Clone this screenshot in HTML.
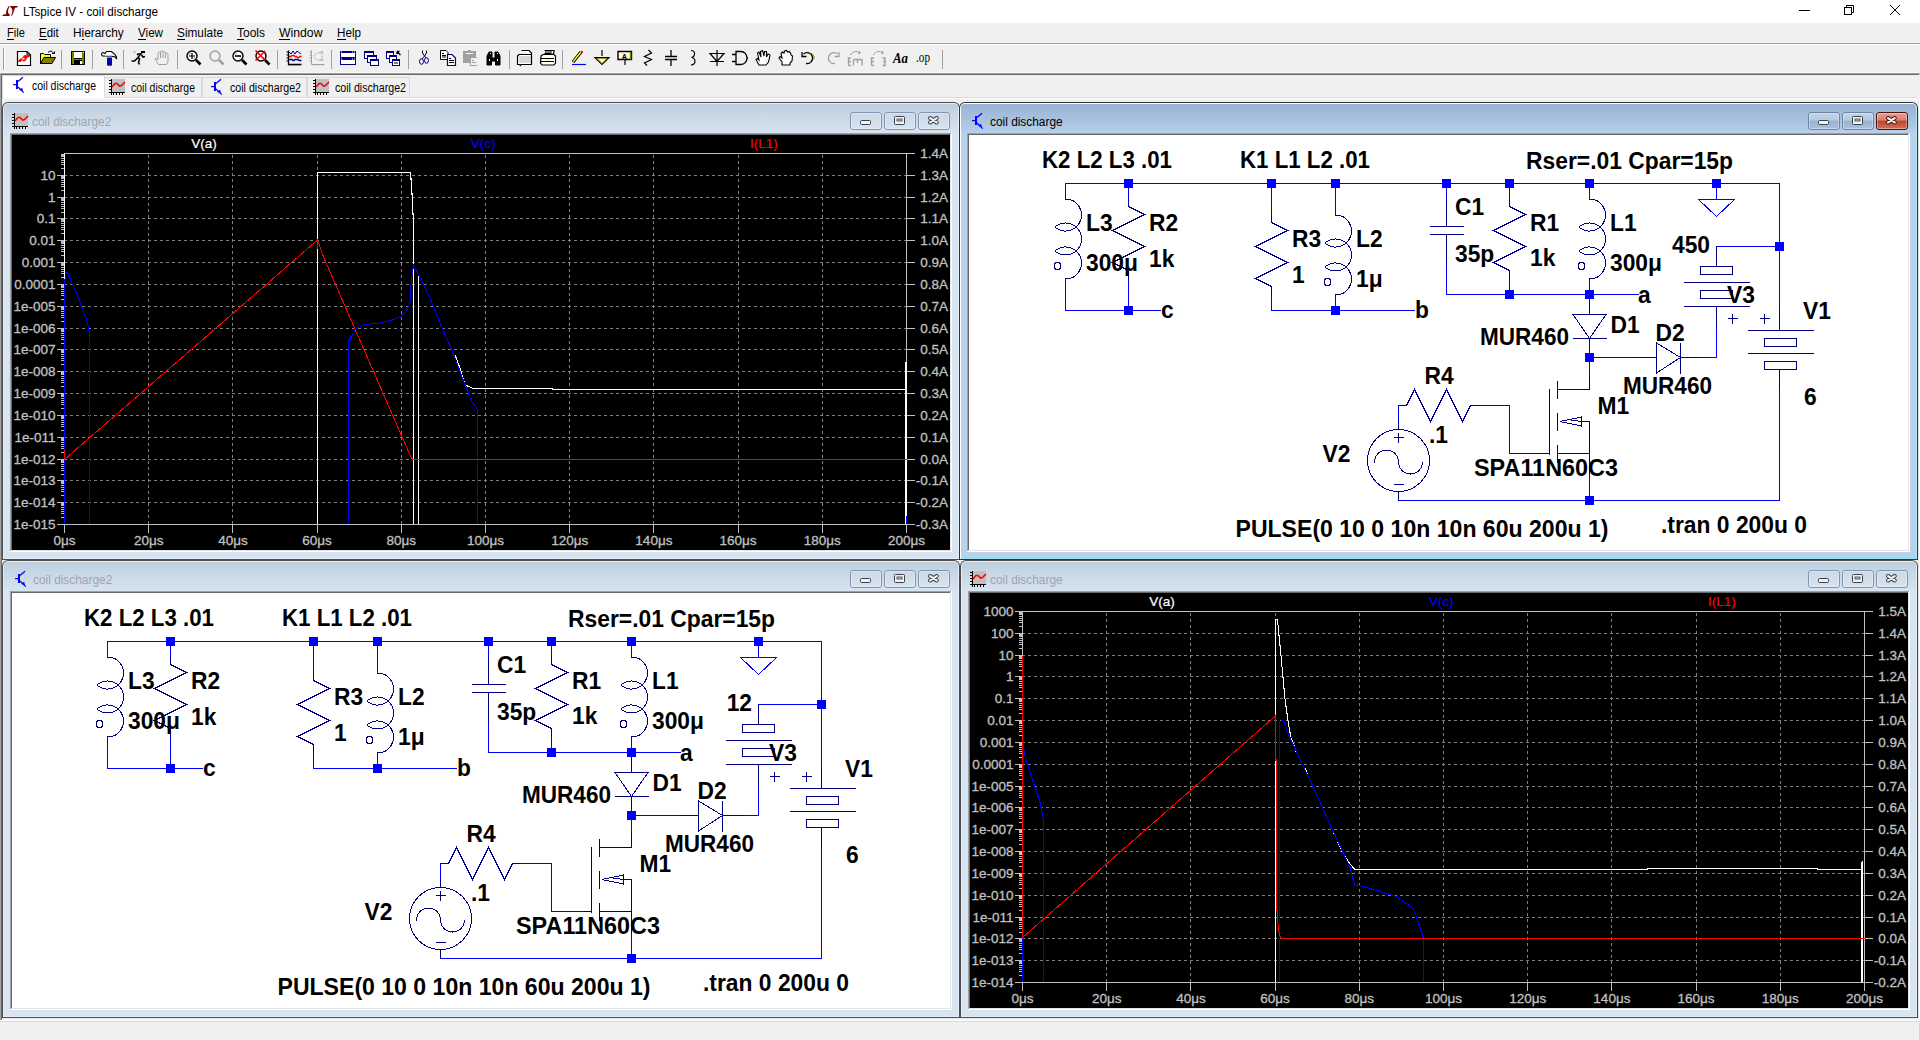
<!DOCTYPE html><html><head><meta charset="utf-8"><style>html,body{margin:0;padding:0;width:1920px;height:1040px;overflow:hidden;background:#F0F0F0}svg{display:block}</style></head><body><svg width="1920" height="1040" viewBox="0 0 1920 1040"><rect x="0" y="0" width="1920" height="1040" fill="#F0F0F0" /><rect x="0" y="0" width="1920" height="23" fill="#FFFFFF" /><path d="M2,16 L3.5,14.5 L6,14.3 Q5.8,11 7.5,8 L9,6 L10,6 Q7.8,9 8,12 Q8.2,14 10,14.5 L9.4,16 Z" fill="#800000"/><path d="M10.5,6 H18 L17,7.4 L15,7.8 L13,14 Q12.5,15.6 11,16 Q12.5,13 12.4,10.5 Q12.4,8.5 10.5,7.3 Z" fill="#800000"/><text x="23" y="16" font-family="Liberation Sans" font-size="12.5" fill="#000" textLength="135" lengthAdjust="spacingAndGlyphs" >LTspice IV - coil discharge</text><rect x="1799" y="10" width="11" height="1" fill="#000" /><rect x="1844.5" y="7.5" width="7" height="7" fill="none" stroke="#000" stroke-width="1"/><path d="M1846.5,7.5 V5.5 H1853.5 V12.5 H1851.5" fill="none" stroke="#000" stroke-width="1"/><path d="M1890,5 L1900,15 M1900,5 L1890,15" fill="none" stroke="#000" stroke-width="1" /><text x="7" y="37" font-family="Liberation Sans" font-size="12.5" fill="#000" textLength="18" lengthAdjust="spacingAndGlyphs" >File</text><rect x="7" y="39" width="7" height="1" fill="#000" /><text x="39" y="37" font-family="Liberation Sans" font-size="12.5" fill="#000" textLength="19.75" lengthAdjust="spacingAndGlyphs" >Edit</text><rect x="39" y="39" width="8" height="1" fill="#000" /><text x="73" y="37" font-family="Liberation Sans" font-size="12.5" fill="#000" textLength="50.75" lengthAdjust="spacingAndGlyphs" >Hierarchy</text><rect x="82" y="39" width="2" height="1" fill="#000" /><text x="138" y="37" font-family="Liberation Sans" font-size="12.5" fill="#000" textLength="25" lengthAdjust="spacingAndGlyphs" >View</text><rect x="138" y="39" width="8" height="1" fill="#000" /><text x="177" y="37" font-family="Liberation Sans" font-size="12.5" fill="#000" textLength="46" lengthAdjust="spacingAndGlyphs" >Simulate</text><rect x="177" y="39" width="8" height="1" fill="#000" /><text x="237" y="37" font-family="Liberation Sans" font-size="12.5" fill="#000" textLength="28" lengthAdjust="spacingAndGlyphs" >Tools</text><rect x="237" y="39" width="7" height="1" fill="#000" /><text x="279" y="37" font-family="Liberation Sans" font-size="12.5" fill="#000" textLength="43.5" lengthAdjust="spacingAndGlyphs" >Window</text><rect x="279" y="39" width="11" height="1" fill="#000" /><text x="337" y="37" font-family="Liberation Sans" font-size="12.5" fill="#000" textLength="24" lengthAdjust="spacingAndGlyphs" >Help</text><rect x="337" y="39" width="9" height="1" fill="#000" /><rect x="0" y="43" width="1920" height="1" fill="#A0A0A0" /><rect x="0" y="44" width="1920" height="1" fill="#FFFFFF" /><rect x="0" y="73" width="1920" height="1" fill="#A0A0A0" /><rect x="0" y="72" width="1920" height="1" fill="#F7F7F7" /><rect x="3" y="48" width="1" height="22" fill="#A0A0A0" /><rect x="4" y="48" width="1" height="22" fill="#FFFFFF" /><rect x="61" y="50" width="1" height="19" fill="#A0A0A0" /><rect x="92" y="50" width="1" height="19" fill="#A0A0A0" /><rect x="123" y="50" width="1" height="19" fill="#A0A0A0" /><rect x="177" y="50" width="1" height="19" fill="#A0A0A0" /><rect x="277" y="50" width="1" height="19" fill="#A0A0A0" /><rect x="331" y="50" width="1" height="19" fill="#A0A0A0" /><rect x="408" y="50" width="1" height="19" fill="#A0A0A0" /><rect x="509" y="50" width="1" height="19" fill="#A0A0A0" /><rect x="562" y="50" width="1" height="19" fill="#A0A0A0" /><rect x="942" y="50" width="1" height="19" fill="#A0A0A0" /><g shape-rendering="geometricPrecision"><g transform="translate(16,50)"><path d="M1.5,1.5 H11 L14.5,5 V15.5 H1.5 Z" stroke="#000" fill="#FFF" stroke-width="1.2" /><path d="M11,1.5 V5 H14.5" stroke="#000" fill="none" stroke-width="1" /><path d="M2,11.5 L4,9 H5.5 L7.5,6.5 L8,5.5 H14 L13,7 H11.5 L9,11 H6.5 L7.5,9.5 H6 L5,11.5 Z" stroke="#FF0000" fill="#FF0000" stroke-width="0.6" /><rect x="6.5" y="8" width="2" height="1.5" fill="#FFF"/></g><g transform="translate(40,50)"><path d="M0.5,3.5 H3.5 L4.5,4.5 H10.5 V7.5 H4.5 L0.5,13.5 Z" stroke="#000" fill="#FFFF00" stroke-width="1" /><path d="M0.5,13.5 L4,7.5 H15.5 L12,13.5 Z" stroke="#000" fill="#808000" stroke-width="1" /><path d="M8,2.5 Q11,-0.5 13.5,3" stroke="#000" fill="none" stroke-width="1" /><path d="M12,3.5 H14.5 V1.5" stroke="#000" fill="none" stroke-width="1" /></g><g transform="translate(70,50)"><rect x="1" y="1" width="14" height="14" fill="#000"/><rect x="2" y="2" width="2" height="12" fill="#808000"/><rect x="12" y="2" width="2" height="12" fill="#808000"/><rect x="4" y="2" width="8" height="6" fill="#FFF"/><rect x="4" y="9" width="8" height="1" fill="#808000"/><rect x="10" y="11" width="2" height="3" fill="#FFF"/><rect x="13" y="2" width="1" height="1" fill="#FFF"/></g><g transform="translate(101,50)"><path d="M0.5,4.5 Q0.5,2.5 2,2.5 L4,3.5 L5.5,1.5 H10.5 L14,4.5 L15.5,7 V8.5 L14,7 L12.5,6.5 H5 L3.5,6 H1.5 Z" stroke="#000" fill="#FFF" stroke-width="1.1" /><rect x="4" y="5" width="7" height="1.5" fill="#C8C8C8"/><rect x="6" y="7.5" width="5" height="8" fill="#0000C8"/><rect x="7" y="12" width="3" height="3.5" fill="#000090"/></g><g transform="translate(131,50)"><path d="M0.5,11 H3.5 L7,7.5 L9.5,4 L11,3 M7,7.5 L8.5,9 L7.5,12.5 L8.5,14.5 M9.5,4 L7,4 L6,5 M10.5,5 L12,7 L14,6.5" stroke="#000" fill="none" stroke-width="1.6" /><rect x="10" y="1" width="4" height="2" fill="#000"/><path d="M2,2 L4,3.5 M3,1 L5,2" stroke="#A0A0A0" fill="none" stroke-width="0.8" /></g><g transform="translate(154,50)"><path d="M4.5,14.5 L1,9 L2,8 L4,10 V3 L5.5,2 L6.5,3 V1.5 L8,0.5 L9,1.5 V2 L10.5,1.5 L11.5,3 V3.5 L13,3 L14,4.5 V12 L12.5,14.5 Z M6.5,3 V8 M9,2 V8 M11.5,3.5 V8" stroke="#A0A0A0" fill="none" stroke-width="1" /></g><g transform="translate(186,50)"><circle cx="6" cy="6" r="5" stroke="#000" stroke-width="1.4" fill="#FFF"/><path d="M10,10 L14.5,14.5" stroke="#000" fill="none" stroke-width="2.6" /><path d="M3,5 A3.5,3.5 0 0 1 5,3" stroke="#00FFFF" fill="none" stroke-width="1" /><path d="M9,7 A3.5,3.5 0 0 1 7,9" stroke="#00FFFF" fill="none" stroke-width="1" /><path d="M6,3 V9 M3,6 H9" stroke="#000" fill="none" stroke-width="1.2" /></g><g transform="translate(209,50)"><circle cx="6" cy="6" r="5" stroke="#A0A0A0" stroke-width="1.4" fill="none"/><path d="M10,10 L14.5,14.5" stroke="#A0A0A0" fill="none" stroke-width="2.6" /></g><g transform="translate(232,50)"><circle cx="6" cy="6" r="5" stroke="#000" stroke-width="1.4" fill="#FFF"/><path d="M10,10 L14.5,14.5" stroke="#000" fill="none" stroke-width="2.6" /><path d="M3,5 A3.5,3.5 0 0 1 5,3" stroke="#00FFFF" fill="none" stroke-width="1" /><path d="M9,7 A3.5,3.5 0 0 1 7,9" stroke="#00FFFF" fill="none" stroke-width="1" /><path d="M3,6 H9" stroke="#000" fill="none" stroke-width="1.6" /></g><g transform="translate(255,50)"><circle cx="6" cy="6" r="5" stroke="#000" stroke-width="1.4" fill="#FFF"/><path d="M10,10 L14.5,14.5" stroke="#000" fill="none" stroke-width="2.6" /><path d="M3,5 A3.5,3.5 0 0 1 5,3" stroke="#00FFFF" fill="none" stroke-width="1" /><path d="M9,7 A3.5,3.5 0 0 1 7,9" stroke="#00FFFF" fill="none" stroke-width="1" /><path d="M0.5,0.5 L10,10 M10,1 L0.5,10.5" stroke="#FF0000" fill="none" stroke-width="1.6" /></g><g transform="translate(286,50)"><path d="M2.5,0.5 V14.5 H15.5" stroke="#000" fill="none" stroke-width="1.3" /><path d="M0.5,2 H2 M0.5,5 H2 M0.5,8 H2 M0.5,11 H2 M4,15.5 V14 M7,15.5 V14 M10,15.5 V14 M13,15.5 V14" stroke="#000" fill="none" stroke-width="1" /><path d="M3,2 L5,4 L7,1 L9,4 L11,1 L15,4" stroke="#000080" fill="none" stroke-width="1" /><path d="M3,6.5 H5 L6,5.5 H8 L9,6.5 H10.5 L11.5,7.5 H13 L14,6.5 H15.5" stroke="#FF0000" fill="none" stroke-width="1.3" /><path d="M3,9.5 H6 L7,10.5 H8 L9,9.5 H12 L13,10.5 H15.5" stroke="#000080" fill="none" stroke-width="1.3" /></g><g transform="translate(309,50)"><path d="M2.5,0.5 V14.5 H15.5" stroke="#A0A0A0" fill="none" stroke-width="1" /><path d="M0.5,2 H2 M0.5,5 H2 M0.5,8 H2 M0.5,11 H2 M4,15.5 V14 M7,15.5 V14 M10,15.5 V14 M13,15.5 V14" stroke="#A0A0A0" fill="none" stroke-width="1" /><path d="M13,3 A6,5 0 0 0 5,6 A6,5 0 0 0 13,10 M13,1 V11 M11.5,2.5 L13,1 L14.5,2.5 M11.5,9.5 L13,11 L14.5,9.5" stroke="#A0A0A0" fill="none" stroke-width="1" stroke-dasharray="1.5,1"/></g><g transform="translate(340,50)"><rect x="0" y="1" width="16" height="7" fill="#000080"/><rect x="1" y="3" width="14" height="4" fill="#FFF"/><rect x="0" y="8" width="16" height="7" fill="#000080"/><rect x="1" y="10" width="14" height="4" fill="#FFF"/><rect x="1" y="1.5" width="1" height="1" fill="#FFF"/><rect x="12" y="1.5" width="1" height="1" fill="#FFF"/><rect x="14" y="1.5" width="1" height="1" fill="#FFF"/><rect x="1" y="8.5" width="1" height="1" fill="#FFF"/><rect x="12" y="8.5" width="1" height="1" fill="#FFF"/><rect x="14" y="8.5" width="1" height="1" fill="#FFF"/></g><g transform="translate(363,50)"><rect x="1" y="1" width="10" height="8" fill="#000080"/><rect x="2" y="3" width="8" height="5" fill="#FFF"/><rect x="4" y="5" width="10" height="8" fill="#000080"/><rect x="5" y="7" width="8" height="5" fill="#FFF"/><rect x="7" y="9" width="9" height="7" fill="#000080"/><rect x="8" y="11" width="7" height="4" fill="#FFF"/></g><g transform="translate(386,50)"><rect x="0" y="1" width="8" height="8" fill="#000080"/><rect x="1" y="3" width="6" height="5" fill="#FFF"/><rect x="3" y="5" width="8" height="8" fill="#000080"/><rect x="4" y="7" width="6" height="5" fill="#FFF"/><rect x="6" y="9" width="8" height="7" fill="#000080"/><rect x="7" y="11" width="6" height="4" fill="#FFF"/><rect x="8" y="12.5" width="4" height="1" fill="#000"/><path d="M11,1.5 L14.5,5 M11,1.5 H13.5 M11,1.5 V4" stroke="#000" fill="none" stroke-width="1.4" /></g><g transform="translate(417,50)"><path d="M5.5,0.5 V3 L7.5,6 L9.5,3 V0.5" stroke="#000" fill="none" stroke-width="1" /><ellipse cx="4.5" cy="11.5" rx="2" ry="2.8" stroke="#000080" fill="none" stroke-width="1"/><ellipse cx="9.5" cy="10.5" rx="2" ry="2.8" stroke="#000080" fill="none" stroke-width="1"/><path d="M7.5,6 L5,9 M7.5,6 L9,8" stroke="#000080" fill="none" stroke-width="1" /></g><g transform="translate(440,50)"><path d="M0.5,0.5 H6 L8,2.5 V9.5 H0.5 Z" stroke="#000" fill="#FFF" stroke-width="1" /><path d="M2,3.5 H4 M2,5.5 H6 M2,7 H6" stroke="#000" fill="none" stroke-width="1" /><path d="M7.5,4.5 H12 L15.5,8 V15.5 H7.5 Z" stroke="#000080" fill="#FFF" stroke-width="1.2" /><path d="M9,8.5 H11 M9,10.5 H14 M9,12.5 H14" stroke="#000" fill="none" stroke-width="1" /></g><g transform="translate(463,50)"><rect x="0" y="1" width="13" height="12" fill="#A0A0A0"/><rect x="5" y="0" width="3" height="2" fill="#A0A0A0"/><rect x="3" y="3" width="7" height="1" fill="#FFF"/><rect x="7" y="7" width="7" height="9" fill="#A0A0A0"/><rect x="8" y="8" width="6" height="7" fill="#F0F0F0"/><rect x="9" y="10" width="2" height="1" fill="#A0A0A0"/><rect x="9" y="12" width="4" height="1" fill="#A0A0A0"/></g><g transform="translate(486,50)"><path d="M1,15 V6 L3,2 H6 V8 H9 V2 H12 L14,6 V15 H9.5 V11 H5.5 V15 Z" stroke="#000" fill="#000" stroke-width="1" /><rect x="3" y="9" width="1" height="2" fill="#FFF"/><rect x="11" y="9" width="1" height="2" fill="#FFF"/><rect x="4" y="3" width="1" height="1" fill="#FFF"/><rect x="11" y="3" width="1" height="1" fill="#FFF"/></g><g transform="translate(517,50)"><path d="M4.5,0.5 H12 L14.5,3 V5 M0.5,6 L2,4.5 H14.5 V14.5 H4 L3.5,15.5 L2.5,14.5 H0.5 Z" stroke="#000" fill="#FFF" stroke-width="1.2" /><rect x="2" y="6" width="12" height="7" fill="#B0B0B0" opacity="0.5"/></g><g transform="translate(540,50)"><path d="M4.5,0.5 H14 V2 L13,4 V5 M1,6 L3,4.5 H14 L15.5,6 V13 L14,15 H2 L0.5,13 Z" stroke="#000" fill="#FFF" stroke-width="1.2" /><path d="M5,2 H12 M4.5,3.5 H11.5 M1,8.5 H14 M1,11.5 H14" stroke="#000" fill="none" stroke-width="1" /><rect x="7" y="9.5" width="3" height="1.5" fill="#FFFF00"/></g><g transform="translate(571,50)"><path d="M2,12 L10,2" stroke="#000" fill="none" stroke-width="3.2" /><path d="M2.2,11.5 L9.8,2.3" stroke="#FFFF00" fill="none" stroke-width="1.4" /><rect x="10" y="1" width="2" height="2" fill="#FF0000"/><path d="M1,14.5 H15" stroke="#0000FF" fill="none" stroke-width="1.2" /></g><g transform="translate(594,50)"><path d="M8,0 V6" stroke="#000" fill="none" stroke-width="1.2" /><path d="M1,7.5 H15 L8,14.5 Z" stroke="#000" fill="#FFFFC0" stroke-width="1.2" /><path d="M3,8.5 H13 L8,13.5 Z" stroke="#808000" fill="none" stroke-width="0.8" /></g><g transform="translate(617,50)"><path d="M1,1.5 H14.5 V9.5 H1 Z" stroke="#000" fill="#FFFFE0" stroke-width="1.4" /><path d="M13.5,2 V9.5" stroke="#808000" fill="none" stroke-width="1.5" /><path d="M8,10 V15" stroke="#000" fill="none" stroke-width="1.2" /><text x="7.5" y="8.5" font-family="Liberation Mono" font-weight="bold" font-size="8" text-anchor="middle" fill="#000">A</text></g><g transform="translate(640,50)"><path d="M8.5,0 L11.5,3 L4.5,6.5 L11.5,9.5 L4.5,13 L7,15.5" stroke="#000" fill="none" stroke-width="1.2" /></g><g transform="translate(663,50)"><path d="M8,0 V6 M2,6.5 H14 M2,9.5 H14 M8,10 V16" stroke="#000" fill="none" stroke-width="1.3" /></g><g transform="translate(686,50)"><path d="M5,0.5 Q8.5,0.5 8.5,3.5 Q8.5,7 5.5,7.5 Q9,8 9,11.5 Q9,14.5 5,15" stroke="#000" fill="none" stroke-width="1.2" /></g><g transform="translate(709,50)"><path d="M8,0 V16 M1,3.5 H15 L8,11.5 Z M1,11.5 H15" stroke="#000" fill="none" stroke-width="1.2" /></g><g transform="translate(732,50)"><path d="M0,4.5 H4 M0,11.5 H4 M4,1.5 H9 A6,6.5 0 0 1 9,14.5 H4 Z M15,8 H16" stroke="#000" fill="none" stroke-width="1.3" /></g><g transform="translate(755,50)"><path d="M4,15 L1,9.5 L2.5,8.5 L4,10 L2.5,3 L4,2 L6,7 L5.5,1.5 L7.5,0.5 L9,6 L9.5,1.5 L11.5,1.5 L11.5,7 L13,4 L15,5 L13.5,12 L11,15 Z" stroke="#000" fill="#FFF" stroke-width="1.1" /><path d="M10.5,10 L11,11" stroke="#00FFFF" fill="none" stroke-width="1" /></g><g transform="translate(778,50)"><path d="M4,15 V12 L1,8 L2,6.5 L4,8 L3,3.5 L4.5,2 L6,3 L6.5,1 L8.5,0.5 L9.5,2 L11,1.5 L12.5,3 L13,5 L14.5,6 L14,11 L12,13 V15 Z" stroke="#000" fill="#FFF" stroke-width="1.1" /></g><g transform="translate(801,50)"><path d="M2.5,4 A5.5,5.5 0 1 1 5,13.5" stroke="#000" fill="none" stroke-width="1.3" /><path d="M1,2 V6.5 H5.5" stroke="#000" fill="none" stroke-width="1.3" /><path d="M9,3 A5.5,5.5 0 0 1 13,9" stroke="#808000" fill="none" stroke-width="1" /></g><g transform="translate(824,50)"><path d="M13.5,4 A5.5,5.5 0 1 0 11,13.5" stroke="#A0A0A0" fill="none" stroke-width="1.3" /><path d="M15,2 V6.5 H10.5" stroke="#A0A0A0" fill="none" stroke-width="1.3" /></g><g transform="translate(847,50)"><path d="M1.5,15.5 V8 H4 M1.5,11.5 H4 M1.5,15.5 H4 M6.5,9.5 V15.5 M6.5,9.5 H15 V15.5 M10.5,9.5 V13" stroke="#A0A0A0" fill="none" stroke-width="1.4" /><path d="M3,5 Q8,-1 13,3 M12,1 L13.5,3 L11,4" stroke="#A0A0A0" fill="none" stroke-width="1" /></g><g transform="translate(870,50)"><path d="M1.5,15.5 V8 H4 M1.5,11.5 H4 M1.5,15.5 H4 M12.5,8 H15 V15.5 H12.5 M13,11.5 H15" stroke="#A0A0A0" fill="none" stroke-width="1.4" /><path d="M3,5 Q8,-1 13,3 M12,1 L13.5,3 L11,4" stroke="#A0A0A0" fill="none" stroke-width="1" /></g><g transform="translate(893,50)"><text x="0" y="13" font-family="Liberation Serif" font-style="italic" font-weight="bold" font-size="14" fill="#000" textLength="15" lengthAdjust="spacingAndGlyphs">Aa</text></g><g transform="translate(916,50)"><text x="0" y="12" font-family="Liberation Serif" font-size="14" fill="#000" textLength="14" lengthAdjust="spacingAndGlyphs">.op</text></g></g><rect x="0" y="74" width="1920" height="948" fill="#F0F0F0" /><rect x="2" y="97" width="1915" height="1" fill="#D9D9D9" /><rect x="2" y="98" width="1915" height="1" fill="#FFFFFF" /><rect x="104" y="77" width="98" height="20" fill="#F0F0F0" /><rect x="104.5" y="77.5" width="97" height="20" fill="none" stroke="#D9D9D9"/><rect x="202" y="77" width="105" height="20" fill="#F0F0F0" /><rect x="202.5" y="77.5" width="104" height="20" fill="none" stroke="#D9D9D9"/><rect x="307" y="77" width="103" height="20" fill="#F0F0F0" /><rect x="307.5" y="77.5" width="102" height="20" fill="none" stroke="#D9D9D9"/><rect x="2" y="75" width="102" height="23" fill="#FFFFFF" /><rect x="2" y="75" width="1" height="24" fill="#D9D9D9" /><rect x="2" y="75" width="103" height="1" fill="#D9D9D9" /><rect x="104" y="75" width="1" height="23" fill="#D9D9D9" /><g transform="translate(12,77)" fill="#0000FF"><rect x="4" y="3" width="2" height="9"/><rect x="1" y="7" width="3" height="1.2"/><path d="M6,4.5 L11,0.2" stroke="#0000FF" stroke-width="1.2" fill="none"/><path d="M6,10 L11.8,15.6" stroke="#0000FF" stroke-width="1.2" fill="none"/><path d="M7,12.8 L10.2,10.8 L11,14.6 Z"/></g><text x="32" y="90" font-family="Liberation Sans" font-size="12" fill="#000" textLength="64" lengthAdjust="spacingAndGlyphs" >coil discharge</text><g transform="translate(109,79)"><rect x="3" y="0" width="13" height="13" fill="#C0C0C0"/><rect x="2" y="0" width="1" height="16" fill="#000"/><rect x="2" y="13" width="14" height="1" fill="#000"/><path d="M0,1.5 H2 M0,4.5 H2 M0,7.5 H2 M0,10.5 H2 M4.5,14 V16 M7.5,14 V16 M10.5,14 V16 M13.5,14 V16 M0,13.5 H2" stroke="#000" stroke-width="1"/><path d="M3,8 L6,4.5 L8,4.5 L10.5,7 L12.5,6.5 L16,3" stroke="#FF0000" stroke-width="1.6" fill="none"/></g><text x="131" y="92" font-family="Liberation Sans" font-size="12" fill="#000" textLength="64" lengthAdjust="spacingAndGlyphs" >coil discharge</text><g transform="translate(210,79)" fill="#0000FF"><rect x="4" y="3" width="2" height="9"/><rect x="1" y="7" width="3" height="1.2"/><path d="M6,4.5 L11,0.2" stroke="#0000FF" stroke-width="1.2" fill="none"/><path d="M6,10 L11.8,15.6" stroke="#0000FF" stroke-width="1.2" fill="none"/><path d="M7,12.8 L10.2,10.8 L11,14.6 Z"/></g><text x="230" y="92" font-family="Liberation Sans" font-size="12" fill="#000" textLength="71" lengthAdjust="spacingAndGlyphs" >coil discharge2</text><g transform="translate(313,79)"><rect x="3" y="0" width="13" height="13" fill="#C0C0C0"/><rect x="2" y="0" width="1" height="16" fill="#000"/><rect x="2" y="13" width="14" height="1" fill="#000"/><path d="M0,1.5 H2 M0,4.5 H2 M0,7.5 H2 M0,10.5 H2 M4.5,14 V16 M7.5,14 V16 M10.5,14 V16 M13.5,14 V16 M0,13.5 H2" stroke="#000" stroke-width="1"/><path d="M3,8 L6,4.5 L8,4.5 L10.5,7 L12.5,6.5 L16,3" stroke="#FF0000" stroke-width="1.6" fill="none"/></g><text x="335" y="92" font-family="Liberation Sans" font-size="12" fill="#000" textLength="71" lengthAdjust="spacingAndGlyphs" >coil discharge2</text><rect x="0" y="73" width="1" height="949" fill="#A0A0A0" /><rect x="1" y="74" width="1" height="948" fill="#696969" /><rect x="1" y="74" width="1918" height="1" fill="#696969" /><rect x="1919" y="99" width="1" height="923" fill="#FFFFFF" /><rect x="1918" y="100" width="1" height="921" fill="#E3E3E3" /><rect x="0" y="1020" width="1920" height="1" fill="#FFFFFF" /><rect x="0" y="1021" width="1920" height="1" fill="#D9D9D9" /><rect x="0" y="1022" width="1920" height="18" fill="#F0F0F0" /><rect x="1919" y="1023" width="1" height="17" fill="#D5D5D5" /><defs><linearGradient id="gAct" x1="0" y1="0" x2="0" y2="1"><stop offset="0" stop-color="#99B4D4"/><stop offset="0.5" stop-color="#A7C0DD"/><stop offset="1" stop-color="#B9D1EA"/></linearGradient><linearGradient id="gIna" x1="0" y1="0" x2="0" y2="1"><stop offset="0" stop-color="#BFCFDF"/><stop offset="0.5" stop-color="#CCDAE8"/><stop offset="1" stop-color="#D7E4F2"/></linearGradient><linearGradient id="gBtnI" x1="0" y1="0" x2="0" y2="1"><stop offset="0" stop-color="#DCE6F0"/><stop offset="0.45" stop-color="#D0DCE8"/><stop offset="0.5" stop-color="#BCCADA"/><stop offset="1" stop-color="#CCD9E7"/></linearGradient><linearGradient id="gBtnA" x1="0" y1="0" x2="0" y2="1"><stop offset="0" stop-color="#C3D5EA"/><stop offset="0.45" stop-color="#B5CAE3"/><stop offset="0.5" stop-color="#97B0CF"/><stop offset="1" stop-color="#ABC4E0"/></linearGradient><linearGradient id="gBtnC" x1="0" y1="0" x2="0" y2="1"><stop offset="0" stop-color="#E8A193"/><stop offset="0.45" stop-color="#D9806F"/><stop offset="0.5" stop-color="#C0432A"/><stop offset="1" stop-color="#D4735C"/></linearGradient></defs><path d="M2,560 V108 A6,6 0 0 1 8,102 H954 A6,6 0 0 1 960,108 V560 Z" fill="#4E4E4E"/><path d="M3,559 V108 A5,5 0 0 1 8,103 H954 A5,5 0 0 1 959,108 V559 Z" fill="#E4ECF4"/><path d="M4,559 V108 A4,4 0 0 1 8,104 H954 A4,4 0 0 1 958,108 V559 Z" fill="#D7E4F2"/><path d="M4,134 V108 A4,4 0 0 1 8,104 H954 A4,4 0 0 1 958,108 V134 Z" fill="url(#gIna)"/><rect x="2" y="559" width="958" height="1" fill="#4E4E4E" /><rect x="3" y="558" width="956" height="1" fill="#E4ECF4" /><rect x="10" y="133" width="942" height="419" fill="#FFFFFF" /><rect x="10" y="133" width="941" height="1" fill="#A0A0A0" /><rect x="10" y="133" width="1" height="418" fill="#A0A0A0" /><rect x="11" y="134" width="939" height="1" fill="#696969" /><rect x="11" y="134" width="1" height="416" fill="#696969" /><rect x="11" y="550" width="940" height="1" fill="#E3E3E3" /><rect x="950" y="134" width="1" height="417" fill="#E3E3E3" /><rect x="12" y="135" width="938" height="415" fill="#000000" /><g transform="translate(12,113)"><rect x="3" y="0" width="13" height="13" fill="#C0C0C0"/><rect x="2" y="0" width="1" height="16" fill="#000"/><rect x="2" y="13" width="14" height="1" fill="#000"/><path d="M0,1.5 H2 M0,4.5 H2 M0,7.5 H2 M0,10.5 H2 M4.5,14 V16 M7.5,14 V16 M10.5,14 V16 M13.5,14 V16 M0,13.5 H2" stroke="#000" stroke-width="1"/><path d="M3,8 L6,4.5 L8,4.5 L10.5,7 L12.5,6.5 L16,3" stroke="#FF0000" stroke-width="1.6" fill="none"/></g><text x="32" y="126" font-family="Liberation Sans" font-size="12" fill="#9FA4AC" textLength="79.244983125" lengthAdjust="spacingAndGlyphs" >coil discharge2</text><rect x="850.5" y="112.5" width="31" height="17" rx="2.5" fill="#FFFFFF" fill-opacity="0.08" stroke="#8494AE"/><rect x="851.5" y="113.5" width="29" height="15" rx="1.5" fill="none" stroke="#FFFFFF" stroke-opacity="0.35"/><rect x="860.5" y="120.5" width="10" height="4" rx="1" fill="#F2F2F2" stroke="#3A3F4A"/><rect x="884.5" y="112.5" width="31" height="17" rx="2.5" fill="#FFFFFF" fill-opacity="0.08" stroke="#8494AE"/><rect x="885.5" y="113.5" width="29" height="15" rx="1.5" fill="none" stroke="#FFFFFF" stroke-opacity="0.35"/><rect x="894.5" y="116.5" width="10" height="8" rx="1" fill="#F2F2F2" stroke="#3A3F4A"/><rect x="897" y="119" width="5" height="2" fill="#B8CCE0" stroke="#3A3F4A" stroke-width="0.8"/><rect x="918.5" y="112.5" width="31" height="17" rx="2.5" fill="#FFFFFF" fill-opacity="0.08" stroke="#8494AE"/><rect x="919.5" y="113.5" width="29" height="15" rx="1.5" fill="none" stroke="#FFFFFF" stroke-opacity="0.35"/><path d="M930.1,118.1 L936.7,122.4 M936.7,118.1 L930.1,122.4" stroke="#3A3F4A" stroke-width="4.2" stroke-linecap="round"/><path d="M930.1,118.1 L936.7,122.4 M936.7,118.1 L930.1,122.4" stroke="#F4F4F4" stroke-width="2.3" stroke-linecap="round"/><g shape-rendering="crispEdges"><line x1="148.5" y1="155" x2="148.5" y2="524" stroke="#808080" stroke-dasharray="3,3"/><line x1="232.5" y1="155" x2="232.5" y2="524" stroke="#808080" stroke-dasharray="3,3"/><line x1="317.5" y1="155" x2="317.5" y2="524" stroke="#808080" stroke-dasharray="3,3"/><line x1="401.5" y1="155" x2="401.5" y2="524" stroke="#808080" stroke-dasharray="3,3"/><line x1="485.5" y1="155" x2="485.5" y2="524" stroke="#808080" stroke-dasharray="3,3"/><line x1="569.5" y1="155" x2="569.5" y2="524" stroke="#808080" stroke-dasharray="3,3"/><line x1="653.5" y1="155" x2="653.5" y2="524" stroke="#808080" stroke-dasharray="3,3"/><line x1="738.5" y1="155" x2="738.5" y2="524" stroke="#808080" stroke-dasharray="3,3"/><line x1="822.5" y1="155" x2="822.5" y2="524" stroke="#808080" stroke-dasharray="3,3"/><line x1="64" y1="175.5" x2="906" y2="175.5" stroke="#808080" stroke-dasharray="3,3"/><line x1="64" y1="197.5" x2="906" y2="197.5" stroke="#808080" stroke-dasharray="3,3"/><line x1="64" y1="218.5" x2="906" y2="218.5" stroke="#808080" stroke-dasharray="3,3"/><line x1="64" y1="240.5" x2="906" y2="240.5" stroke="#808080" stroke-dasharray="3,3"/><line x1="64" y1="262.5" x2="906" y2="262.5" stroke="#808080" stroke-dasharray="3,3"/><line x1="64" y1="284.5" x2="906" y2="284.5" stroke="#808080" stroke-dasharray="3,3"/><line x1="64" y1="306.5" x2="906" y2="306.5" stroke="#808080" stroke-dasharray="3,3"/><line x1="64" y1="328.5" x2="906" y2="328.5" stroke="#808080" stroke-dasharray="3,3"/><line x1="64" y1="349.5" x2="906" y2="349.5" stroke="#808080" stroke-dasharray="3,3"/><line x1="64" y1="371.5" x2="906" y2="371.5" stroke="#808080" stroke-dasharray="3,3"/><line x1="64" y1="393.5" x2="906" y2="393.5" stroke="#808080" stroke-dasharray="3,3"/><line x1="64" y1="415.5" x2="906" y2="415.5" stroke="#808080" stroke-dasharray="3,3"/><line x1="64" y1="437.5" x2="906" y2="437.5" stroke="#808080" stroke-dasharray="3,3"/><line x1="64" y1="459.5" x2="906" y2="459.5" stroke="#808080" stroke-dasharray="3,3"/><line x1="64" y1="480.5" x2="906" y2="480.5" stroke="#808080" stroke-dasharray="3,3"/><line x1="64" y1="502.5" x2="906" y2="502.5" stroke="#808080" stroke-dasharray="3,3"/><rect x="64" y="153" width="843" height="1" fill="#C0C0C0" /><rect x="64" y="524" width="843" height="1" fill="#C0C0C0" /><rect x="64" y="153" width="1" height="372" fill="#C0C0C0" /><rect x="906" y="153" width="1" height="372" fill="#C0C0C0" /><rect x="906" y="153" width="9" height="1" fill="#C0C0C0" /><rect x="61" y="168" width="4" height="1" fill="#C0C0C0" /><rect x="61" y="164" width="4" height="1" fill="#C0C0C0" /><rect x="61" y="162" width="4" height="1" fill="#C0C0C0" /><rect x="61" y="160" width="4" height="1" fill="#C0C0C0" /><rect x="61" y="158" width="4" height="1" fill="#C0C0C0" /><rect x="61" y="156" width="4" height="1" fill="#C0C0C0" /><rect x="61" y="155" width="4" height="1" fill="#C0C0C0" /><rect x="61" y="154" width="4" height="1" fill="#C0C0C0" /><rect x="57" y="175" width="8" height="1" fill="#C0C0C0" /><rect x="906" y="175" width="9" height="1" fill="#C0C0C0" /><rect x="61" y="190" width="4" height="1" fill="#C0C0C0" /><rect x="61" y="186" width="4" height="1" fill="#C0C0C0" /><rect x="61" y="184" width="4" height="1" fill="#C0C0C0" /><rect x="61" y="182" width="4" height="1" fill="#C0C0C0" /><rect x="61" y="180" width="4" height="1" fill="#C0C0C0" /><rect x="61" y="178" width="4" height="1" fill="#C0C0C0" /><rect x="61" y="177" width="4" height="1" fill="#C0C0C0" /><rect x="61" y="176" width="4" height="1" fill="#C0C0C0" /><rect x="57" y="197" width="8" height="1" fill="#C0C0C0" /><rect x="906" y="197" width="9" height="1" fill="#C0C0C0" /><rect x="61" y="212" width="4" height="1" fill="#C0C0C0" /><rect x="61" y="208" width="4" height="1" fill="#C0C0C0" /><rect x="61" y="206" width="4" height="1" fill="#C0C0C0" /><rect x="61" y="204" width="4" height="1" fill="#C0C0C0" /><rect x="61" y="202" width="4" height="1" fill="#C0C0C0" /><rect x="61" y="200" width="4" height="1" fill="#C0C0C0" /><rect x="61" y="199" width="4" height="1" fill="#C0C0C0" /><rect x="61" y="198" width="4" height="1" fill="#C0C0C0" /><rect x="57" y="218" width="8" height="1" fill="#C0C0C0" /><rect x="906" y="218" width="9" height="1" fill="#C0C0C0" /><rect x="61" y="233" width="4" height="1" fill="#C0C0C0" /><rect x="61" y="229" width="4" height="1" fill="#C0C0C0" /><rect x="61" y="227" width="4" height="1" fill="#C0C0C0" /><rect x="61" y="225" width="4" height="1" fill="#C0C0C0" /><rect x="61" y="223" width="4" height="1" fill="#C0C0C0" /><rect x="61" y="221" width="4" height="1" fill="#C0C0C0" /><rect x="61" y="220" width="4" height="1" fill="#C0C0C0" /><rect x="61" y="219" width="4" height="1" fill="#C0C0C0" /><rect x="57" y="240" width="8" height="1" fill="#C0C0C0" /><rect x="906" y="240" width="9" height="1" fill="#C0C0C0" /><rect x="61" y="255" width="4" height="1" fill="#C0C0C0" /><rect x="61" y="251" width="4" height="1" fill="#C0C0C0" /><rect x="61" y="249" width="4" height="1" fill="#C0C0C0" /><rect x="61" y="247" width="4" height="1" fill="#C0C0C0" /><rect x="61" y="245" width="4" height="1" fill="#C0C0C0" /><rect x="61" y="243" width="4" height="1" fill="#C0C0C0" /><rect x="61" y="242" width="4" height="1" fill="#C0C0C0" /><rect x="61" y="241" width="4" height="1" fill="#C0C0C0" /><rect x="57" y="262" width="8" height="1" fill="#C0C0C0" /><rect x="906" y="262" width="9" height="1" fill="#C0C0C0" /><rect x="61" y="277" width="4" height="1" fill="#C0C0C0" /><rect x="61" y="273" width="4" height="1" fill="#C0C0C0" /><rect x="61" y="271" width="4" height="1" fill="#C0C0C0" /><rect x="61" y="269" width="4" height="1" fill="#C0C0C0" /><rect x="61" y="267" width="4" height="1" fill="#C0C0C0" /><rect x="61" y="265" width="4" height="1" fill="#C0C0C0" /><rect x="61" y="264" width="4" height="1" fill="#C0C0C0" /><rect x="61" y="263" width="4" height="1" fill="#C0C0C0" /><rect x="57" y="284" width="8" height="1" fill="#C0C0C0" /><rect x="906" y="284" width="9" height="1" fill="#C0C0C0" /><rect x="61" y="299" width="4" height="1" fill="#C0C0C0" /><rect x="61" y="295" width="4" height="1" fill="#C0C0C0" /><rect x="61" y="293" width="4" height="1" fill="#C0C0C0" /><rect x="61" y="291" width="4" height="1" fill="#C0C0C0" /><rect x="61" y="289" width="4" height="1" fill="#C0C0C0" /><rect x="61" y="287" width="4" height="1" fill="#C0C0C0" /><rect x="61" y="286" width="4" height="1" fill="#C0C0C0" /><rect x="61" y="285" width="4" height="1" fill="#C0C0C0" /><rect x="57" y="306" width="8" height="1" fill="#C0C0C0" /><rect x="906" y="306" width="9" height="1" fill="#C0C0C0" /><rect x="61" y="321" width="4" height="1" fill="#C0C0C0" /><rect x="61" y="317" width="4" height="1" fill="#C0C0C0" /><rect x="61" y="315" width="4" height="1" fill="#C0C0C0" /><rect x="61" y="313" width="4" height="1" fill="#C0C0C0" /><rect x="61" y="311" width="4" height="1" fill="#C0C0C0" /><rect x="61" y="309" width="4" height="1" fill="#C0C0C0" /><rect x="61" y="308" width="4" height="1" fill="#C0C0C0" /><rect x="61" y="307" width="4" height="1" fill="#C0C0C0" /><rect x="57" y="328" width="8" height="1" fill="#C0C0C0" /><rect x="906" y="328" width="9" height="1" fill="#C0C0C0" /><rect x="61" y="343" width="4" height="1" fill="#C0C0C0" /><rect x="61" y="339" width="4" height="1" fill="#C0C0C0" /><rect x="61" y="337" width="4" height="1" fill="#C0C0C0" /><rect x="61" y="335" width="4" height="1" fill="#C0C0C0" /><rect x="61" y="333" width="4" height="1" fill="#C0C0C0" /><rect x="61" y="331" width="4" height="1" fill="#C0C0C0" /><rect x="61" y="330" width="4" height="1" fill="#C0C0C0" /><rect x="61" y="329" width="4" height="1" fill="#C0C0C0" /><rect x="57" y="349" width="8" height="1" fill="#C0C0C0" /><rect x="906" y="349" width="9" height="1" fill="#C0C0C0" /><rect x="61" y="364" width="4" height="1" fill="#C0C0C0" /><rect x="61" y="360" width="4" height="1" fill="#C0C0C0" /><rect x="61" y="358" width="4" height="1" fill="#C0C0C0" /><rect x="61" y="356" width="4" height="1" fill="#C0C0C0" /><rect x="61" y="354" width="4" height="1" fill="#C0C0C0" /><rect x="61" y="352" width="4" height="1" fill="#C0C0C0" /><rect x="61" y="351" width="4" height="1" fill="#C0C0C0" /><rect x="61" y="350" width="4" height="1" fill="#C0C0C0" /><rect x="57" y="371" width="8" height="1" fill="#C0C0C0" /><rect x="906" y="371" width="9" height="1" fill="#C0C0C0" /><rect x="61" y="386" width="4" height="1" fill="#C0C0C0" /><rect x="61" y="382" width="4" height="1" fill="#C0C0C0" /><rect x="61" y="380" width="4" height="1" fill="#C0C0C0" /><rect x="61" y="378" width="4" height="1" fill="#C0C0C0" /><rect x="61" y="376" width="4" height="1" fill="#C0C0C0" /><rect x="61" y="374" width="4" height="1" fill="#C0C0C0" /><rect x="61" y="373" width="4" height="1" fill="#C0C0C0" /><rect x="61" y="372" width="4" height="1" fill="#C0C0C0" /><rect x="57" y="393" width="8" height="1" fill="#C0C0C0" /><rect x="906" y="393" width="9" height="1" fill="#C0C0C0" /><rect x="61" y="408" width="4" height="1" fill="#C0C0C0" /><rect x="61" y="404" width="4" height="1" fill="#C0C0C0" /><rect x="61" y="402" width="4" height="1" fill="#C0C0C0" /><rect x="61" y="400" width="4" height="1" fill="#C0C0C0" /><rect x="61" y="398" width="4" height="1" fill="#C0C0C0" /><rect x="61" y="396" width="4" height="1" fill="#C0C0C0" /><rect x="61" y="395" width="4" height="1" fill="#C0C0C0" /><rect x="61" y="394" width="4" height="1" fill="#C0C0C0" /><rect x="57" y="415" width="8" height="1" fill="#C0C0C0" /><rect x="906" y="415" width="9" height="1" fill="#C0C0C0" /><rect x="61" y="430" width="4" height="1" fill="#C0C0C0" /><rect x="61" y="426" width="4" height="1" fill="#C0C0C0" /><rect x="61" y="424" width="4" height="1" fill="#C0C0C0" /><rect x="61" y="422" width="4" height="1" fill="#C0C0C0" /><rect x="61" y="420" width="4" height="1" fill="#C0C0C0" /><rect x="61" y="418" width="4" height="1" fill="#C0C0C0" /><rect x="61" y="417" width="4" height="1" fill="#C0C0C0" /><rect x="61" y="416" width="4" height="1" fill="#C0C0C0" /><rect x="57" y="437" width="8" height="1" fill="#C0C0C0" /><rect x="906" y="437" width="9" height="1" fill="#C0C0C0" /><rect x="61" y="452" width="4" height="1" fill="#C0C0C0" /><rect x="61" y="448" width="4" height="1" fill="#C0C0C0" /><rect x="61" y="446" width="4" height="1" fill="#C0C0C0" /><rect x="61" y="444" width="4" height="1" fill="#C0C0C0" /><rect x="61" y="442" width="4" height="1" fill="#C0C0C0" /><rect x="61" y="440" width="4" height="1" fill="#C0C0C0" /><rect x="61" y="439" width="4" height="1" fill="#C0C0C0" /><rect x="61" y="438" width="4" height="1" fill="#C0C0C0" /><rect x="57" y="459" width="8" height="1" fill="#C0C0C0" /><rect x="906" y="459" width="9" height="1" fill="#C0C0C0" /><rect x="61" y="474" width="4" height="1" fill="#C0C0C0" /><rect x="61" y="470" width="4" height="1" fill="#C0C0C0" /><rect x="61" y="468" width="4" height="1" fill="#C0C0C0" /><rect x="61" y="466" width="4" height="1" fill="#C0C0C0" /><rect x="61" y="464" width="4" height="1" fill="#C0C0C0" /><rect x="61" y="462" width="4" height="1" fill="#C0C0C0" /><rect x="61" y="461" width="4" height="1" fill="#C0C0C0" /><rect x="61" y="460" width="4" height="1" fill="#C0C0C0" /><rect x="57" y="480" width="8" height="1" fill="#C0C0C0" /><rect x="906" y="480" width="9" height="1" fill="#C0C0C0" /><rect x="61" y="495" width="4" height="1" fill="#C0C0C0" /><rect x="61" y="491" width="4" height="1" fill="#C0C0C0" /><rect x="61" y="489" width="4" height="1" fill="#C0C0C0" /><rect x="61" y="487" width="4" height="1" fill="#C0C0C0" /><rect x="61" y="485" width="4" height="1" fill="#C0C0C0" /><rect x="61" y="483" width="4" height="1" fill="#C0C0C0" /><rect x="61" y="482" width="4" height="1" fill="#C0C0C0" /><rect x="61" y="481" width="4" height="1" fill="#C0C0C0" /><rect x="57" y="502" width="8" height="1" fill="#C0C0C0" /><rect x="906" y="502" width="9" height="1" fill="#C0C0C0" /><rect x="61" y="517" width="4" height="1" fill="#C0C0C0" /><rect x="61" y="513" width="4" height="1" fill="#C0C0C0" /><rect x="61" y="511" width="4" height="1" fill="#C0C0C0" /><rect x="61" y="509" width="4" height="1" fill="#C0C0C0" /><rect x="61" y="507" width="4" height="1" fill="#C0C0C0" /><rect x="61" y="505" width="4" height="1" fill="#C0C0C0" /><rect x="61" y="504" width="4" height="1" fill="#C0C0C0" /><rect x="61" y="503" width="4" height="1" fill="#C0C0C0" /><rect x="57" y="524" width="8" height="1" fill="#C0C0C0" /><rect x="906" y="524" width="9" height="1" fill="#C0C0C0" /><rect x="64" y="524" width="1" height="9" fill="#C0C0C0" /><rect x="148" y="524" width="1" height="9" fill="#C0C0C0" /><rect x="232" y="524" width="1" height="9" fill="#C0C0C0" /><rect x="317" y="524" width="1" height="9" fill="#C0C0C0" /><rect x="401" y="524" width="1" height="9" fill="#C0C0C0" /><rect x="485" y="524" width="1" height="9" fill="#C0C0C0" /><rect x="569" y="524" width="1" height="9" fill="#C0C0C0" /><rect x="653" y="524" width="1" height="9" fill="#C0C0C0" /><rect x="738" y="524" width="1" height="9" fill="#C0C0C0" /><rect x="822" y="524" width="1" height="9" fill="#C0C0C0" /><rect x="906" y="524" width="1" height="9" fill="#C0C0C0" /></g><text x="55.5" y="180" font-family="Liberation Sans" font-size="13.5" fill="#C0C0C0" text-anchor="end" stroke="#C0C0C0" stroke-width="0.3">10</text><text x="55.5" y="202" font-family="Liberation Sans" font-size="13.5" fill="#C0C0C0" text-anchor="end" stroke="#C0C0C0" stroke-width="0.3">1</text><text x="55.5" y="223" font-family="Liberation Sans" font-size="13.5" fill="#C0C0C0" text-anchor="end" stroke="#C0C0C0" stroke-width="0.3">0.1</text><text x="55.5" y="245" font-family="Liberation Sans" font-size="13.5" fill="#C0C0C0" text-anchor="end" stroke="#C0C0C0" stroke-width="0.3">0.01</text><text x="55.5" y="267" font-family="Liberation Sans" font-size="13.5" fill="#C0C0C0" text-anchor="end" stroke="#C0C0C0" stroke-width="0.3">0.001</text><text x="55.5" y="289" font-family="Liberation Sans" font-size="13.5" fill="#C0C0C0" text-anchor="end" stroke="#C0C0C0" stroke-width="0.3">0.0001</text><text x="55.5" y="311" font-family="Liberation Sans" font-size="13.5" fill="#C0C0C0" text-anchor="end" stroke="#C0C0C0" stroke-width="0.3">1e-005</text><text x="55.5" y="333" font-family="Liberation Sans" font-size="13.5" fill="#C0C0C0" text-anchor="end" stroke="#C0C0C0" stroke-width="0.3">1e-006</text><text x="55.5" y="354" font-family="Liberation Sans" font-size="13.5" fill="#C0C0C0" text-anchor="end" stroke="#C0C0C0" stroke-width="0.3">1e-007</text><text x="55.5" y="376" font-family="Liberation Sans" font-size="13.5" fill="#C0C0C0" text-anchor="end" stroke="#C0C0C0" stroke-width="0.3">1e-008</text><text x="55.5" y="398" font-family="Liberation Sans" font-size="13.5" fill="#C0C0C0" text-anchor="end" stroke="#C0C0C0" stroke-width="0.3">1e-009</text><text x="55.5" y="420" font-family="Liberation Sans" font-size="13.5" fill="#C0C0C0" text-anchor="end" stroke="#C0C0C0" stroke-width="0.3">1e-010</text><text x="55.5" y="442" font-family="Liberation Sans" font-size="13.5" fill="#C0C0C0" text-anchor="end" stroke="#C0C0C0" stroke-width="0.3">1e-011</text><text x="55.5" y="464" font-family="Liberation Sans" font-size="13.5" fill="#C0C0C0" text-anchor="end" stroke="#C0C0C0" stroke-width="0.3">1e-012</text><text x="55.5" y="485" font-family="Liberation Sans" font-size="13.5" fill="#C0C0C0" text-anchor="end" stroke="#C0C0C0" stroke-width="0.3">1e-013</text><text x="55.5" y="507" font-family="Liberation Sans" font-size="13.5" fill="#C0C0C0" text-anchor="end" stroke="#C0C0C0" stroke-width="0.3">1e-014</text><text x="55.5" y="529" font-family="Liberation Sans" font-size="13.5" fill="#C0C0C0" text-anchor="end" stroke="#C0C0C0" stroke-width="0.3">1e-015</text><text x="948" y="158" font-family="Liberation Sans" font-size="13.5" fill="#C0C0C0" text-anchor="end" stroke="#C0C0C0" stroke-width="0.3">1.4A</text><text x="948" y="180" font-family="Liberation Sans" font-size="13.5" fill="#C0C0C0" text-anchor="end" stroke="#C0C0C0" stroke-width="0.3">1.3A</text><text x="948" y="202" font-family="Liberation Sans" font-size="13.5" fill="#C0C0C0" text-anchor="end" stroke="#C0C0C0" stroke-width="0.3">1.2A</text><text x="948" y="223" font-family="Liberation Sans" font-size="13.5" fill="#C0C0C0" text-anchor="end" stroke="#C0C0C0" stroke-width="0.3">1.1A</text><text x="948" y="245" font-family="Liberation Sans" font-size="13.5" fill="#C0C0C0" text-anchor="end" stroke="#C0C0C0" stroke-width="0.3">1.0A</text><text x="948" y="267" font-family="Liberation Sans" font-size="13.5" fill="#C0C0C0" text-anchor="end" stroke="#C0C0C0" stroke-width="0.3">0.9A</text><text x="948" y="289" font-family="Liberation Sans" font-size="13.5" fill="#C0C0C0" text-anchor="end" stroke="#C0C0C0" stroke-width="0.3">0.8A</text><text x="948" y="311" font-family="Liberation Sans" font-size="13.5" fill="#C0C0C0" text-anchor="end" stroke="#C0C0C0" stroke-width="0.3">0.7A</text><text x="948" y="333" font-family="Liberation Sans" font-size="13.5" fill="#C0C0C0" text-anchor="end" stroke="#C0C0C0" stroke-width="0.3">0.6A</text><text x="948" y="354" font-family="Liberation Sans" font-size="13.5" fill="#C0C0C0" text-anchor="end" stroke="#C0C0C0" stroke-width="0.3">0.5A</text><text x="948" y="376" font-family="Liberation Sans" font-size="13.5" fill="#C0C0C0" text-anchor="end" stroke="#C0C0C0" stroke-width="0.3">0.4A</text><text x="948" y="398" font-family="Liberation Sans" font-size="13.5" fill="#C0C0C0" text-anchor="end" stroke="#C0C0C0" stroke-width="0.3">0.3A</text><text x="948" y="420" font-family="Liberation Sans" font-size="13.5" fill="#C0C0C0" text-anchor="end" stroke="#C0C0C0" stroke-width="0.3">0.2A</text><text x="948" y="442" font-family="Liberation Sans" font-size="13.5" fill="#C0C0C0" text-anchor="end" stroke="#C0C0C0" stroke-width="0.3">0.1A</text><text x="948" y="464" font-family="Liberation Sans" font-size="13.5" fill="#C0C0C0" text-anchor="end" stroke="#C0C0C0" stroke-width="0.3">0.0A</text><text x="948" y="485" font-family="Liberation Sans" font-size="13.5" fill="#C0C0C0" text-anchor="end" stroke="#C0C0C0" stroke-width="0.3">-0.1A</text><text x="948" y="507" font-family="Liberation Sans" font-size="13.5" fill="#C0C0C0" text-anchor="end" stroke="#C0C0C0" stroke-width="0.3">-0.2A</text><text x="948" y="529" font-family="Liberation Sans" font-size="13.5" fill="#C0C0C0" text-anchor="end" stroke="#C0C0C0" stroke-width="0.3">-0.3A</text><text x="64.5" y="544.5" font-family="Liberation Sans" font-size="13.5" fill="#C0C0C0" text-anchor="middle" stroke="#C0C0C0" stroke-width="0.3">0μs</text><text x="148.7" y="544.5" font-family="Liberation Sans" font-size="13.5" fill="#C0C0C0" text-anchor="middle" stroke="#C0C0C0" stroke-width="0.3">20μs</text><text x="232.9" y="544.5" font-family="Liberation Sans" font-size="13.5" fill="#C0C0C0" text-anchor="middle" stroke="#C0C0C0" stroke-width="0.3">40μs</text><text x="317.1" y="544.5" font-family="Liberation Sans" font-size="13.5" fill="#C0C0C0" text-anchor="middle" stroke="#C0C0C0" stroke-width="0.3">60μs</text><text x="401.3" y="544.5" font-family="Liberation Sans" font-size="13.5" fill="#C0C0C0" text-anchor="middle" stroke="#C0C0C0" stroke-width="0.3">80μs</text><text x="485.5" y="544.5" font-family="Liberation Sans" font-size="13.5" fill="#C0C0C0" text-anchor="middle" stroke="#C0C0C0" stroke-width="0.3">100μs</text><text x="569.7" y="544.5" font-family="Liberation Sans" font-size="13.5" fill="#C0C0C0" text-anchor="middle" stroke="#C0C0C0" stroke-width="0.3">120μs</text><text x="653.9" y="544.5" font-family="Liberation Sans" font-size="13.5" fill="#C0C0C0" text-anchor="middle" stroke="#C0C0C0" stroke-width="0.3">140μs</text><text x="738.1" y="544.5" font-family="Liberation Sans" font-size="13.5" fill="#C0C0C0" text-anchor="middle" stroke="#C0C0C0" stroke-width="0.3">160μs</text><text x="822.3000000000001" y="544.5" font-family="Liberation Sans" font-size="13.5" fill="#C0C0C0" text-anchor="middle" stroke="#C0C0C0" stroke-width="0.3">180μs</text><text x="906.5" y="544.5" font-family="Liberation Sans" font-size="13.5" fill="#C0C0C0" text-anchor="middle" stroke="#C0C0C0" stroke-width="0.3">200μs</text><g shape-rendering="crispEdges" stroke-linejoin="round"><path d="M64.5,154 V284 M317.5,524 V172.5 H410.5 V179 H411.5 V194 H412.5 V214 H413.5 V524 M418.5,276 V524 M455,355 L460,368 L465,385 L470,387 L473,388.5 H552.5 V389.5 H905.5 M905.5,362 V524 M906.5,362 V516" fill="none" stroke="#FFFFFF" stroke-width="1.05" /><path d="M64.5,524 V284 L65.5,274 L67,272 L72,283 L80,302 L86,318 L88.5,328 L89.5,334 V524" fill="none" stroke="#0000FF" stroke-width="1.05" /><path d="M348.5,524 V343 L349.5,338 L350.5,336 L350.5,340 L353,333 L357,328 L363,325 L370,324 L380,323 L388,321 L395,319 L401,316 L405,313 L408,308 L410,302 L410.5,293 L411,285 L412.5,272 L413.5,265 L420,277 L430,298 L442,328 L452,350 L462,377 L472,402 L476,407 L477.5,410 V524 M906.5,516 V524" fill="none" stroke="#0000FF" stroke-width="1.05" /><path d="M64.5,450 V459.5 L317.5,240 V249 M317.5,240 L323.5,257 L410,455 L412.5,459.5 H906.5" fill="none" stroke="#FF0000" stroke-width="1.05" /></g><text x="204" y="148" font-family="Liberation Sans" font-size="13.5" fill="#FFFFFF" text-anchor="middle" stroke="#FFFFFF" stroke-width="0.2">V(a)</text><text x="483" y="148" font-family="Liberation Sans" font-size="13.5" fill="#0000FF" text-anchor="middle" stroke="#0000FF" stroke-width="0.2">V(c)</text><text x="764" y="148" font-family="Liberation Sans" font-size="13.5" fill="#FF0000" text-anchor="middle" stroke="#FF0000" stroke-width="0.2">I(L1)</text><path d="M2,1018 V566 A6,6 0 0 1 8,560 H954 A6,6 0 0 1 960,566 V1018 Z" fill="#4E4E4E"/><path d="M3,1017 V566 A5,5 0 0 1 8,561 H954 A5,5 0 0 1 959,566 V1017 Z" fill="#E4ECF4"/><path d="M4,1017 V566 A4,4 0 0 1 8,562 H954 A4,4 0 0 1 958,566 V1017 Z" fill="#D7E4F2"/><path d="M4,592 V566 A4,4 0 0 1 8,562 H954 A4,4 0 0 1 958,566 V592 Z" fill="url(#gIna)"/><rect x="2" y="1017" width="958" height="1" fill="#4E4E4E" /><rect x="3" y="1016" width="956" height="1" fill="#E4ECF4" /><rect x="10" y="591" width="942" height="419" fill="#FFFFFF" /><rect x="10" y="591" width="941" height="1" fill="#A0A0A0" /><rect x="10" y="591" width="1" height="418" fill="#A0A0A0" /><rect x="11" y="592" width="939" height="1" fill="#696969" /><rect x="11" y="592" width="1" height="416" fill="#696969" /><rect x="11" y="1008" width="940" height="1" fill="#E3E3E3" /><rect x="950" y="592" width="1" height="417" fill="#E3E3E3" /><rect x="12" y="593" width="938" height="415" fill="#FFFFFF" /><g transform="translate(14,571)" fill="#0000FF"><rect x="4" y="3" width="2" height="9"/><rect x="1" y="7" width="3" height="1.2"/><path d="M6,4.5 L11,0.2" stroke="#0000FF" stroke-width="1.2" fill="none"/><path d="M6,10 L11.8,15.6" stroke="#0000FF" stroke-width="1.2" fill="none"/><path d="M7,12.8 L10.2,10.8 L11,14.6 Z"/></g><text x="33" y="584" font-family="Liberation Sans" font-size="12" fill="#9FA4AC" textLength="79.244983125" lengthAdjust="spacingAndGlyphs" >coil discharge2</text><rect x="850.5" y="570.5" width="31" height="17" rx="2.5" fill="#FFFFFF" fill-opacity="0.08" stroke="#8494AE"/><rect x="851.5" y="571.5" width="29" height="15" rx="1.5" fill="none" stroke="#FFFFFF" stroke-opacity="0.35"/><rect x="860.5" y="578.5" width="10" height="4" rx="1" fill="#F2F2F2" stroke="#3A3F4A"/><rect x="884.5" y="570.5" width="31" height="17" rx="2.5" fill="#FFFFFF" fill-opacity="0.08" stroke="#8494AE"/><rect x="885.5" y="571.5" width="29" height="15" rx="1.5" fill="none" stroke="#FFFFFF" stroke-opacity="0.35"/><rect x="894.5" y="574.5" width="10" height="8" rx="1" fill="#F2F2F2" stroke="#3A3F4A"/><rect x="897" y="577" width="5" height="2" fill="#B8CCE0" stroke="#3A3F4A" stroke-width="0.8"/><rect x="918.5" y="570.5" width="31" height="17" rx="2.5" fill="#FFFFFF" fill-opacity="0.08" stroke="#8494AE"/><rect x="919.5" y="571.5" width="29" height="15" rx="1.5" fill="none" stroke="#FFFFFF" stroke-opacity="0.35"/><path d="M930.1,576.1 L936.7,580.4 M936.7,576.1 L930.1,580.4" stroke="#3A3F4A" stroke-width="4.2" stroke-linecap="round"/><path d="M930.1,576.1 L936.7,580.4 M936.7,576.1 L930.1,580.4" stroke="#F4F4F4" stroke-width="2.3" stroke-linecap="round"/><g transform="translate(-958,458)" shape-rendering="crispEdges"><path d="M1065.5,199.5 L1065.5,183.5 L1779.5,183.5 L1779.5,311.5" stroke="#0000FF" fill="none" stroke-linecap="square"/><path d="M1779.5,389.5 L1779.5,500.5 L1398.5,500.5 L1398.5,491.5" stroke="#0000FF" fill="none" stroke-linecap="square"/><path d="M1128.5,183.5 L1128.5,199.5" stroke="#0000FF" fill="none" stroke-linecap="square"/><path d="M1271.5,183.5 L1271.5,215.5" stroke="#0000FF" fill="none" stroke-linecap="square"/><path d="M1335.5,183.5 L1335.5,215.5" stroke="#0000FF" fill="none" stroke-linecap="square"/><path d="M1446.5,183.5 L1446.5,200.5" stroke="#0000FF" fill="none" stroke-linecap="square"/><path d="M1509.5,183.5 L1509.5,199.5" stroke="#0000FF" fill="none" stroke-linecap="square"/><path d="M1589.5,183.5 L1589.5,199.5" stroke="#0000FF" fill="none" stroke-linecap="square"/><path d="M1716.5,183.5 L1716.5,199.5" stroke="#0000FF" fill="none" stroke-linecap="square"/><path d="M1065.5,278.5 L1065.5,310.5 L1160.5,310.5" stroke="#0000FF" fill="none" stroke-linecap="square"/><path d="M1128.5,278.5 L1128.5,310.5" stroke="#0000FF" fill="none" stroke-linecap="square"/><path d="M1271.5,295.5 L1271.5,310.5 L1414.5,310.5" stroke="#0000FF" fill="none" stroke-linecap="square"/><path d="M1335.5,295.5 L1335.5,310.5" stroke="#0000FF" fill="none" stroke-linecap="square"/><path d="M1446.5,263.5 L1446.5,294.5 L1638.5,294.5" stroke="#0000FF" fill="none" stroke-linecap="square"/><path d="M1509.5,279.5 L1509.5,294.5" stroke="#0000FF" fill="none" stroke-linecap="square"/><path d="M1589.5,279.5 L1589.5,294.5" stroke="#0000FF" fill="none" stroke-linecap="square"/><path d="M1589.5,349.5 L1589.5,374.5" stroke="#0000FF" fill="none" stroke-linecap="square"/><path d="M1589.5,357.5 L1638.5,357.5" stroke="#0000FF" fill="none" stroke-linecap="square"/><path d="M1700.5,357.5 L1716.5,357.5 L1716.5,326.5" stroke="#0000FF" fill="none" stroke-linecap="square"/><path d="M1716.5,246.5 L1779.5,246.5" stroke="#0000FF" fill="none" stroke-linecap="square"/><path d="M1779.5,246.5 L1779.5,311.5" stroke="#0000FF" fill="none" stroke-linecap="square"/><path d="M1478.5,405.5 L1509.5,405.5 L1509.5,453.5 L1541.5,453.5" stroke="#0000FF" fill="none" stroke-linecap="square"/><path d="M1398.5,421.5 L1398.5,405.5" stroke="#0000FF" fill="none" stroke-linecap="square"/><path d="M1589.5,474.5 L1589.5,500.5" stroke="#0000FF" fill="none" stroke-linecap="square"/><path d="M1698.5,199.5 H1734.5 L1716.5,216.5 Z" stroke="#0000FF" fill="none"/><path d="M1065.5,199 A16,16 0 1 1 1054.92,227 A16,16 0 1 1 1054.92,251 A16,16 0 1 1 1065.5,279" stroke="#000080" fill="none" stroke-linecap="square"/><circle cx="1057.5" cy="266" r="3.5" stroke="#000080" fill="none"/><path d="M1128.5,199.5 V206.5 L1144.5,214.5 L1112.5,230.5 L1144.5,246.5 L1112.5,262.5 L1128.5,270.5 V278.5" stroke="#000080" fill="none" stroke-linecap="square"/><path d="M1271.5,215.5 V222.5 L1287.5,230.5 L1255.5,246.5 L1287.5,262.5 L1255.5,278.5 L1271.5,286.5 V294.5" stroke="#000080" fill="none" stroke-linecap="square"/><path d="M1335.5,215 A16,16 0 1 1 1324.92,243 A16,16 0 1 1 1324.92,267 A16,16 0 1 1 1335.5,295" stroke="#000080" fill="none" stroke-linecap="square"/><circle cx="1327.5" cy="282" r="3.5" stroke="#000080" fill="none"/><path d="M1509.5,199.5 V206.5 L1525.5,214.5 L1493.5,230.5 L1525.5,246.5 L1493.5,262.5 L1509.5,270.5 V278.5" stroke="#000080" fill="none" stroke-linecap="square"/><path d="M1589.5,199 A16,16 0 1 1 1578.92,227 A16,16 0 1 1 1578.92,251 A16,16 0 1 1 1589.5,279" stroke="#000080" fill="none" stroke-linecap="square"/><circle cx="1581.5" cy="266" r="3.5" stroke="#000080" fill="none"/><path d="M1446.5,200 V226.5 M1430,226.5 H1463 M1430,234.5 H1463 M1446.5,234.5 V263" stroke="#000080" fill="none" stroke-linecap="square"/><path d="M1716.5,246 V266 M1700.5,266.5 h32 v8 h-32 z M1684,282.5 H1749 M1700.5,290.5 h32 v8 h-32 z M1684,306.5 H1749 M1716.5,306.5 V326" stroke="#000080" fill="none" stroke-linecap="square"/><path d="M1728,318.5 H1737 M1732.5,314 V323" stroke="#000080" fill="none" stroke-linecap="square"/><path d="M1779.5,311 V330 M1748,330.5 H1813 M1764.5,338.5 h32 v8 h-32 z M1748,353.5 H1813 M1764.5,361.5 h32 v8 h-32 z M1779.5,369.5 V389" stroke="#000080" fill="none" stroke-linecap="square"/><path d="M1760,318.5 H1769 M1764.5,314 V323" stroke="#000080" fill="none" stroke-linecap="square"/><path d="M1779.5,389.5 L1779.5,500.5" stroke="#0000FF" fill="none" stroke-linecap="square"/><path d="M1589.5,294 V314 M1573,314.5 H1606 L1589.5,338.5 L1573,314.5 M1573,338.5 H1606 M1589.5,338 V349" stroke="#000080" fill="none" stroke-linecap="square"/><path d="M1638,357.5 H1656 M1656.5,343 V373 L1680.5,357.5 L1656.5,343 M1680.5,343 V373 M1680,357.5 H1700" stroke="#000080" fill="none" stroke-linecap="square"/><path d="M1589.5,374 V389.5 H1557.5 M1557.5,381 V398 M1557.5,413 V430 M1557.5,445 V462 M1549.5,389 V454 M1549.5,453.5 H1541 M1557.5,453.5 H1589.5 M1589.5,421.5 V474 M1589.5,421.5 H1581.5 M1581.5,417 V426 M1581.5,417 L1560,421.5 L1581.5,426 M1568,419.5 L1581.5,421.5" stroke="#000080" fill="none" stroke-linecap="square"/><path d="M1398.5,405.5 H1406.5 L1414.5,389.5 L1430.5,421.5 L1446.5,389.5 L1462.5,421.5 L1470.5,405.5 H1478.5" stroke="#000080" fill="none" stroke-linecap="square"/><path d="M1398.5,421 V429.5 M1398.5,491 V500" stroke="#000080" fill="none" stroke-linecap="square"/><circle cx="1398.5" cy="460.5" r="31" stroke="#000080" fill="none"/><path d="M1394,437.5 H1403 M1398.5,433 V442 M1394,484.5 H1403" stroke="#000080" fill="none" stroke-linecap="square"/><path d="M1374.5,462 A12,12 0 0 1 1398.5,462 A12,12 0 0 0 1422.5,462" stroke="#000080" fill="none" stroke-linecap="square"/><rect x="1124" y="179" width="9" height="9" fill="#0000FF"/><rect x="1267" y="179" width="9" height="9" fill="#0000FF"/><rect x="1331" y="179" width="9" height="9" fill="#0000FF"/><rect x="1442" y="179" width="9" height="9" fill="#0000FF"/><rect x="1505" y="179" width="9" height="9" fill="#0000FF"/><rect x="1585" y="179" width="9" height="9" fill="#0000FF"/><rect x="1712" y="179" width="9" height="9" fill="#0000FF"/><rect x="1775" y="242" width="9" height="9" fill="#0000FF"/><rect x="1124" y="306" width="9" height="9" fill="#0000FF"/><rect x="1331" y="306" width="9" height="9" fill="#0000FF"/><rect x="1505" y="290" width="9" height="9" fill="#0000FF"/><rect x="1585" y="290" width="9" height="9" fill="#0000FF"/><rect x="1585" y="353" width="9" height="9" fill="#0000FF"/><rect x="1585" y="496" width="9" height="9" fill="#0000FF"/><text x="1042" y="168" font-family="Liberation Sans" font-weight="bold" font-size="23.5" fill="#000" textLength="130" lengthAdjust="spacingAndGlyphs">K2 L2 L3 .01</text><text x="1240" y="168" font-family="Liberation Sans" font-weight="bold" font-size="23.5" fill="#000" textLength="130" lengthAdjust="spacingAndGlyphs">K1 L1 L2 .01</text><text x="1526" y="168.5" font-family="Liberation Sans" font-weight="bold" font-size="23.5" fill="#000" textLength="207" lengthAdjust="spacingAndGlyphs">Rser=.01 Cpar=15p</text><text x="1086" y="230.5" font-family="Liberation Sans" font-weight="bold" font-size="23.5" fill="#000" textLength="26.6" lengthAdjust="spacingAndGlyphs">L3</text><text x="1086" y="270.5" font-family="Liberation Sans" font-weight="bold" font-size="23.5" fill="#000" textLength="51.98" lengthAdjust="spacingAndGlyphs">300μ</text><text x="1149" y="230.5" font-family="Liberation Sans" font-weight="bold" font-size="23.5" fill="#000" textLength="29.14" lengthAdjust="spacingAndGlyphs">R2</text><text x="1149" y="267" font-family="Liberation Sans" font-weight="bold" font-size="23.5" fill="#000" textLength="25.36" lengthAdjust="spacingAndGlyphs">1k</text><text x="1292" y="247" font-family="Liberation Sans" font-weight="bold" font-size="23.5" fill="#000" textLength="29.14" lengthAdjust="spacingAndGlyphs">R3</text><text x="1292" y="283" font-family="Liberation Sans" font-weight="bold" font-size="23.5" fill="#000" textLength="12.68" lengthAdjust="spacingAndGlyphs">1</text><text x="1356" y="247" font-family="Liberation Sans" font-weight="bold" font-size="23.5" fill="#000" textLength="26.6" lengthAdjust="spacingAndGlyphs">L2</text><text x="1356" y="287" font-family="Liberation Sans" font-weight="bold" font-size="23.5" fill="#000" textLength="26.62" lengthAdjust="spacingAndGlyphs">1μ</text><text x="1455" y="214.5" font-family="Liberation Sans" font-weight="bold" font-size="23.5" fill="#000" textLength="29.14" lengthAdjust="spacingAndGlyphs">C1</text><text x="1455" y="262" font-family="Liberation Sans" font-weight="bold" font-size="23.5" fill="#000" textLength="39.28" lengthAdjust="spacingAndGlyphs">35p</text><text x="1530" y="230.5" font-family="Liberation Sans" font-weight="bold" font-size="23.5" fill="#000" textLength="29.14" lengthAdjust="spacingAndGlyphs">R1</text><text x="1530" y="266" font-family="Liberation Sans" font-weight="bold" font-size="23.5" fill="#000" textLength="25.36" lengthAdjust="spacingAndGlyphs">1k</text><text x="1610" y="230.5" font-family="Liberation Sans" font-weight="bold" font-size="23.5" fill="#000" textLength="26.6" lengthAdjust="spacingAndGlyphs">L1</text><text x="1610" y="270.5" font-family="Liberation Sans" font-weight="bold" font-size="23.5" fill="#000" textLength="51.98" lengthAdjust="spacingAndGlyphs">300μ</text><text x="1710" y="252.5" font-family="Liberation Sans" font-weight="bold" font-size="23.5" fill="#000" text-anchor="end" textLength="25.36" lengthAdjust="spacingAndGlyphs">12</text><text x="1727" y="302.5" font-family="Liberation Sans" font-weight="bold" font-size="23.5" fill="#000" textLength="27.88" lengthAdjust="spacingAndGlyphs">V3</text><text x="1803" y="318.5" font-family="Liberation Sans" font-weight="bold" font-size="23.5" fill="#000" textLength="27.88" lengthAdjust="spacingAndGlyphs">V1</text><text x="1804" y="405" font-family="Liberation Sans" font-weight="bold" font-size="23.5" fill="#000" textLength="12.68" lengthAdjust="spacingAndGlyphs">6</text><text x="1638" y="302.5" font-family="Liberation Sans" font-weight="bold" font-size="23.5" fill="#000" textLength="12.68" lengthAdjust="spacingAndGlyphs">a</text><text x="1415" y="318" font-family="Liberation Sans" font-weight="bold" font-size="23.5" fill="#000" textLength="13.92" lengthAdjust="spacingAndGlyphs">b</text><text x="1161" y="318" font-family="Liberation Sans" font-weight="bold" font-size="23.5" fill="#000" textLength="12.68" lengthAdjust="spacingAndGlyphs">c</text><text x="1610.5" y="332.5" font-family="Liberation Sans" font-weight="bold" font-size="23.5" fill="#000" textLength="29.14" lengthAdjust="spacingAndGlyphs">D1</text><text x="1480" y="345" font-family="Liberation Sans" font-weight="bold" font-size="23.5" fill="#000" textLength="89" lengthAdjust="spacingAndGlyphs">MUR460</text><text x="1655.5" y="341" font-family="Liberation Sans" font-weight="bold" font-size="23.5" fill="#000" textLength="29.14" lengthAdjust="spacingAndGlyphs">D2</text><text x="1623" y="393.5" font-family="Liberation Sans" font-weight="bold" font-size="23.5" fill="#000" textLength="89" lengthAdjust="spacingAndGlyphs">MUR460</text><text x="1597.5" y="413.5" font-family="Liberation Sans" font-weight="bold" font-size="23.5" fill="#000" textLength="31.67" lengthAdjust="spacingAndGlyphs">M1</text><text x="1474" y="475.5" font-family="Liberation Sans" font-weight="bold" font-size="23.5" fill="#000" textLength="144" lengthAdjust="spacingAndGlyphs">SPA11N60C3</text><text x="1424.5" y="383.5" font-family="Liberation Sans" font-weight="bold" font-size="23.5" fill="#000" textLength="29.14" lengthAdjust="spacingAndGlyphs">R4</text><text x="1429" y="442.5" font-family="Liberation Sans" font-weight="bold" font-size="23.5" fill="#000" textLength="19.01" lengthAdjust="spacingAndGlyphs">.1</text><text x="1322.5" y="462" font-family="Liberation Sans" font-weight="bold" font-size="23.5" fill="#000" textLength="27.88" lengthAdjust="spacingAndGlyphs">V2</text><text x="1235.5" y="537" font-family="Liberation Sans" font-weight="bold" font-size="23.5" fill="#000" textLength="373" lengthAdjust="spacingAndGlyphs">PULSE(0 10 0 10n 10n 60u 200u 1)</text><text x="1661" y="532.5" font-family="Liberation Sans" font-weight="bold" font-size="23.5" fill="#000" textLength="146" lengthAdjust="spacingAndGlyphs">.tran 0 200u 0</text></g><path d="M960,1018 V566 A6,6 0 0 1 966,560 H1912 A6,6 0 0 1 1918,566 V1018 Z" fill="#4E4E4E"/><path d="M961,1017 V566 A5,5 0 0 1 966,561 H1912 A5,5 0 0 1 1917,566 V1017 Z" fill="#E4ECF4"/><path d="M962,1017 V566 A4,4 0 0 1 966,562 H1912 A4,4 0 0 1 1916,566 V1017 Z" fill="#D7E4F2"/><path d="M962,592 V566 A4,4 0 0 1 966,562 H1912 A4,4 0 0 1 1916,566 V592 Z" fill="url(#gIna)"/><rect x="960" y="1017" width="958" height="1" fill="#4E4E4E" /><rect x="961" y="1016" width="956" height="1" fill="#E4ECF4" /><rect x="968" y="591" width="942" height="419" fill="#FFFFFF" /><rect x="968" y="591" width="941" height="1" fill="#A0A0A0" /><rect x="968" y="591" width="1" height="418" fill="#A0A0A0" /><rect x="969" y="592" width="939" height="1" fill="#696969" /><rect x="969" y="592" width="1" height="416" fill="#696969" /><rect x="969" y="1008" width="940" height="1" fill="#E3E3E3" /><rect x="1908" y="592" width="1" height="417" fill="#E3E3E3" /><rect x="970" y="593" width="938" height="415" fill="#000000" /><g transform="translate(970,571)"><rect x="3" y="0" width="13" height="13" fill="#C0C0C0"/><rect x="2" y="0" width="1" height="16" fill="#000"/><rect x="2" y="13" width="14" height="1" fill="#000"/><path d="M0,1.5 H2 M0,4.5 H2 M0,7.5 H2 M0,10.5 H2 M4.5,14 V16 M7.5,14 V16 M10.5,14 V16 M13.5,14 V16 M0,13.5 H2" stroke="#000" stroke-width="1"/><path d="M3,8 L6,4.5 L8,4.5 L10.5,7 L12.5,6.5 L16,3" stroke="#FF0000" stroke-width="1.6" fill="none"/></g><text x="990" y="584" font-family="Liberation Sans" font-size="12" fill="#9FA4AC" textLength="72.637846875" lengthAdjust="spacingAndGlyphs" >coil discharge</text><rect x="1808.5" y="570.5" width="31" height="17" rx="2.5" fill="#FFFFFF" fill-opacity="0.08" stroke="#8494AE"/><rect x="1809.5" y="571.5" width="29" height="15" rx="1.5" fill="none" stroke="#FFFFFF" stroke-opacity="0.35"/><rect x="1818.5" y="578.5" width="10" height="4" rx="1" fill="#F2F2F2" stroke="#3A3F4A"/><rect x="1842.5" y="570.5" width="31" height="17" rx="2.5" fill="#FFFFFF" fill-opacity="0.08" stroke="#8494AE"/><rect x="1843.5" y="571.5" width="29" height="15" rx="1.5" fill="none" stroke="#FFFFFF" stroke-opacity="0.35"/><rect x="1852.5" y="574.5" width="10" height="8" rx="1" fill="#F2F2F2" stroke="#3A3F4A"/><rect x="1855" y="577" width="5" height="2" fill="#B8CCE0" stroke="#3A3F4A" stroke-width="0.8"/><rect x="1876.5" y="570.5" width="31" height="17" rx="2.5" fill="#FFFFFF" fill-opacity="0.08" stroke="#8494AE"/><rect x="1877.5" y="571.5" width="29" height="15" rx="1.5" fill="none" stroke="#FFFFFF" stroke-opacity="0.35"/><path d="M1888.1,576.1 L1894.7,580.4 M1894.7,576.1 L1888.1,580.4" stroke="#3A3F4A" stroke-width="4.2" stroke-linecap="round"/><path d="M1888.1,576.1 L1894.7,580.4 M1894.7,576.1 L1888.1,580.4" stroke="#F4F4F4" stroke-width="2.3" stroke-linecap="round"/><g shape-rendering="crispEdges"><line x1="1106.5" y1="613" x2="1106.5" y2="982" stroke="#808080" stroke-dasharray="3,3"/><line x1="1190.5" y1="613" x2="1190.5" y2="982" stroke="#808080" stroke-dasharray="3,3"/><line x1="1275.5" y1="613" x2="1275.5" y2="982" stroke="#808080" stroke-dasharray="3,3"/><line x1="1359.5" y1="613" x2="1359.5" y2="982" stroke="#808080" stroke-dasharray="3,3"/><line x1="1443.5" y1="613" x2="1443.5" y2="982" stroke="#808080" stroke-dasharray="3,3"/><line x1="1527.5" y1="613" x2="1527.5" y2="982" stroke="#808080" stroke-dasharray="3,3"/><line x1="1611.5" y1="613" x2="1611.5" y2="982" stroke="#808080" stroke-dasharray="3,3"/><line x1="1696.5" y1="613" x2="1696.5" y2="982" stroke="#808080" stroke-dasharray="3,3"/><line x1="1780.5" y1="613" x2="1780.5" y2="982" stroke="#808080" stroke-dasharray="3,3"/><line x1="1022" y1="633.5" x2="1864" y2="633.5" stroke="#808080" stroke-dasharray="3,3"/><line x1="1022" y1="655.5" x2="1864" y2="655.5" stroke="#808080" stroke-dasharray="3,3"/><line x1="1022" y1="676.5" x2="1864" y2="676.5" stroke="#808080" stroke-dasharray="3,3"/><line x1="1022" y1="698.5" x2="1864" y2="698.5" stroke="#808080" stroke-dasharray="3,3"/><line x1="1022" y1="720.5" x2="1864" y2="720.5" stroke="#808080" stroke-dasharray="3,3"/><line x1="1022" y1="742.5" x2="1864" y2="742.5" stroke="#808080" stroke-dasharray="3,3"/><line x1="1022" y1="764.5" x2="1864" y2="764.5" stroke="#808080" stroke-dasharray="3,3"/><line x1="1022" y1="786.5" x2="1864" y2="786.5" stroke="#808080" stroke-dasharray="3,3"/><line x1="1022" y1="807.5" x2="1864" y2="807.5" stroke="#808080" stroke-dasharray="3,3"/><line x1="1022" y1="829.5" x2="1864" y2="829.5" stroke="#808080" stroke-dasharray="3,3"/><line x1="1022" y1="851.5" x2="1864" y2="851.5" stroke="#808080" stroke-dasharray="3,3"/><line x1="1022" y1="873.5" x2="1864" y2="873.5" stroke="#808080" stroke-dasharray="3,3"/><line x1="1022" y1="895.5" x2="1864" y2="895.5" stroke="#808080" stroke-dasharray="3,3"/><line x1="1022" y1="917.5" x2="1864" y2="917.5" stroke="#808080" stroke-dasharray="3,3"/><line x1="1022" y1="938.5" x2="1864" y2="938.5" stroke="#808080" stroke-dasharray="3,3"/><line x1="1022" y1="960.5" x2="1864" y2="960.5" stroke="#808080" stroke-dasharray="3,3"/><rect x="1022" y="611" width="843" height="1" fill="#C0C0C0" /><rect x="1022" y="982" width="843" height="1" fill="#C0C0C0" /><rect x="1022" y="611" width="1" height="372" fill="#C0C0C0" /><rect x="1864" y="611" width="1" height="372" fill="#C0C0C0" /><rect x="1015" y="611" width="8" height="1" fill="#C0C0C0" /><rect x="1864" y="611" width="9" height="1" fill="#C0C0C0" /><rect x="1019" y="626" width="4" height="1" fill="#C0C0C0" /><rect x="1019" y="622" width="4" height="1" fill="#C0C0C0" /><rect x="1019" y="620" width="4" height="1" fill="#C0C0C0" /><rect x="1019" y="618" width="4" height="1" fill="#C0C0C0" /><rect x="1019" y="616" width="4" height="1" fill="#C0C0C0" /><rect x="1019" y="614" width="4" height="1" fill="#C0C0C0" /><rect x="1019" y="613" width="4" height="1" fill="#C0C0C0" /><rect x="1019" y="612" width="4" height="1" fill="#C0C0C0" /><rect x="1015" y="633" width="8" height="1" fill="#C0C0C0" /><rect x="1864" y="633" width="9" height="1" fill="#C0C0C0" /><rect x="1019" y="648" width="4" height="1" fill="#C0C0C0" /><rect x="1019" y="644" width="4" height="1" fill="#C0C0C0" /><rect x="1019" y="642" width="4" height="1" fill="#C0C0C0" /><rect x="1019" y="640" width="4" height="1" fill="#C0C0C0" /><rect x="1019" y="638" width="4" height="1" fill="#C0C0C0" /><rect x="1019" y="636" width="4" height="1" fill="#C0C0C0" /><rect x="1019" y="635" width="4" height="1" fill="#C0C0C0" /><rect x="1019" y="634" width="4" height="1" fill="#C0C0C0" /><rect x="1015" y="655" width="8" height="1" fill="#C0C0C0" /><rect x="1864" y="655" width="9" height="1" fill="#C0C0C0" /><rect x="1019" y="670" width="4" height="1" fill="#C0C0C0" /><rect x="1019" y="666" width="4" height="1" fill="#C0C0C0" /><rect x="1019" y="664" width="4" height="1" fill="#C0C0C0" /><rect x="1019" y="662" width="4" height="1" fill="#C0C0C0" /><rect x="1019" y="660" width="4" height="1" fill="#C0C0C0" /><rect x="1019" y="658" width="4" height="1" fill="#C0C0C0" /><rect x="1019" y="657" width="4" height="1" fill="#C0C0C0" /><rect x="1019" y="656" width="4" height="1" fill="#C0C0C0" /><rect x="1015" y="676" width="8" height="1" fill="#C0C0C0" /><rect x="1864" y="676" width="9" height="1" fill="#C0C0C0" /><rect x="1019" y="691" width="4" height="1" fill="#C0C0C0" /><rect x="1019" y="687" width="4" height="1" fill="#C0C0C0" /><rect x="1019" y="685" width="4" height="1" fill="#C0C0C0" /><rect x="1019" y="683" width="4" height="1" fill="#C0C0C0" /><rect x="1019" y="681" width="4" height="1" fill="#C0C0C0" /><rect x="1019" y="679" width="4" height="1" fill="#C0C0C0" /><rect x="1019" y="678" width="4" height="1" fill="#C0C0C0" /><rect x="1019" y="677" width="4" height="1" fill="#C0C0C0" /><rect x="1015" y="698" width="8" height="1" fill="#C0C0C0" /><rect x="1864" y="698" width="9" height="1" fill="#C0C0C0" /><rect x="1019" y="713" width="4" height="1" fill="#C0C0C0" /><rect x="1019" y="709" width="4" height="1" fill="#C0C0C0" /><rect x="1019" y="707" width="4" height="1" fill="#C0C0C0" /><rect x="1019" y="705" width="4" height="1" fill="#C0C0C0" /><rect x="1019" y="703" width="4" height="1" fill="#C0C0C0" /><rect x="1019" y="701" width="4" height="1" fill="#C0C0C0" /><rect x="1019" y="700" width="4" height="1" fill="#C0C0C0" /><rect x="1019" y="699" width="4" height="1" fill="#C0C0C0" /><rect x="1015" y="720" width="8" height="1" fill="#C0C0C0" /><rect x="1864" y="720" width="9" height="1" fill="#C0C0C0" /><rect x="1019" y="735" width="4" height="1" fill="#C0C0C0" /><rect x="1019" y="731" width="4" height="1" fill="#C0C0C0" /><rect x="1019" y="729" width="4" height="1" fill="#C0C0C0" /><rect x="1019" y="727" width="4" height="1" fill="#C0C0C0" /><rect x="1019" y="725" width="4" height="1" fill="#C0C0C0" /><rect x="1019" y="723" width="4" height="1" fill="#C0C0C0" /><rect x="1019" y="722" width="4" height="1" fill="#C0C0C0" /><rect x="1019" y="721" width="4" height="1" fill="#C0C0C0" /><rect x="1015" y="742" width="8" height="1" fill="#C0C0C0" /><rect x="1864" y="742" width="9" height="1" fill="#C0C0C0" /><rect x="1019" y="757" width="4" height="1" fill="#C0C0C0" /><rect x="1019" y="753" width="4" height="1" fill="#C0C0C0" /><rect x="1019" y="751" width="4" height="1" fill="#C0C0C0" /><rect x="1019" y="749" width="4" height="1" fill="#C0C0C0" /><rect x="1019" y="747" width="4" height="1" fill="#C0C0C0" /><rect x="1019" y="745" width="4" height="1" fill="#C0C0C0" /><rect x="1019" y="744" width="4" height="1" fill="#C0C0C0" /><rect x="1019" y="743" width="4" height="1" fill="#C0C0C0" /><rect x="1015" y="764" width="8" height="1" fill="#C0C0C0" /><rect x="1864" y="764" width="9" height="1" fill="#C0C0C0" /><rect x="1019" y="779" width="4" height="1" fill="#C0C0C0" /><rect x="1019" y="775" width="4" height="1" fill="#C0C0C0" /><rect x="1019" y="773" width="4" height="1" fill="#C0C0C0" /><rect x="1019" y="771" width="4" height="1" fill="#C0C0C0" /><rect x="1019" y="769" width="4" height="1" fill="#C0C0C0" /><rect x="1019" y="767" width="4" height="1" fill="#C0C0C0" /><rect x="1019" y="766" width="4" height="1" fill="#C0C0C0" /><rect x="1019" y="765" width="4" height="1" fill="#C0C0C0" /><rect x="1015" y="786" width="8" height="1" fill="#C0C0C0" /><rect x="1864" y="786" width="9" height="1" fill="#C0C0C0" /><rect x="1019" y="801" width="4" height="1" fill="#C0C0C0" /><rect x="1019" y="797" width="4" height="1" fill="#C0C0C0" /><rect x="1019" y="795" width="4" height="1" fill="#C0C0C0" /><rect x="1019" y="793" width="4" height="1" fill="#C0C0C0" /><rect x="1019" y="791" width="4" height="1" fill="#C0C0C0" /><rect x="1019" y="789" width="4" height="1" fill="#C0C0C0" /><rect x="1019" y="788" width="4" height="1" fill="#C0C0C0" /><rect x="1019" y="787" width="4" height="1" fill="#C0C0C0" /><rect x="1015" y="807" width="8" height="1" fill="#C0C0C0" /><rect x="1864" y="807" width="9" height="1" fill="#C0C0C0" /><rect x="1019" y="822" width="4" height="1" fill="#C0C0C0" /><rect x="1019" y="818" width="4" height="1" fill="#C0C0C0" /><rect x="1019" y="816" width="4" height="1" fill="#C0C0C0" /><rect x="1019" y="814" width="4" height="1" fill="#C0C0C0" /><rect x="1019" y="812" width="4" height="1" fill="#C0C0C0" /><rect x="1019" y="810" width="4" height="1" fill="#C0C0C0" /><rect x="1019" y="809" width="4" height="1" fill="#C0C0C0" /><rect x="1019" y="808" width="4" height="1" fill="#C0C0C0" /><rect x="1015" y="829" width="8" height="1" fill="#C0C0C0" /><rect x="1864" y="829" width="9" height="1" fill="#C0C0C0" /><rect x="1019" y="844" width="4" height="1" fill="#C0C0C0" /><rect x="1019" y="840" width="4" height="1" fill="#C0C0C0" /><rect x="1019" y="838" width="4" height="1" fill="#C0C0C0" /><rect x="1019" y="836" width="4" height="1" fill="#C0C0C0" /><rect x="1019" y="834" width="4" height="1" fill="#C0C0C0" /><rect x="1019" y="832" width="4" height="1" fill="#C0C0C0" /><rect x="1019" y="831" width="4" height="1" fill="#C0C0C0" /><rect x="1019" y="830" width="4" height="1" fill="#C0C0C0" /><rect x="1015" y="851" width="8" height="1" fill="#C0C0C0" /><rect x="1864" y="851" width="9" height="1" fill="#C0C0C0" /><rect x="1019" y="866" width="4" height="1" fill="#C0C0C0" /><rect x="1019" y="862" width="4" height="1" fill="#C0C0C0" /><rect x="1019" y="860" width="4" height="1" fill="#C0C0C0" /><rect x="1019" y="858" width="4" height="1" fill="#C0C0C0" /><rect x="1019" y="856" width="4" height="1" fill="#C0C0C0" /><rect x="1019" y="854" width="4" height="1" fill="#C0C0C0" /><rect x="1019" y="853" width="4" height="1" fill="#C0C0C0" /><rect x="1019" y="852" width="4" height="1" fill="#C0C0C0" /><rect x="1015" y="873" width="8" height="1" fill="#C0C0C0" /><rect x="1864" y="873" width="9" height="1" fill="#C0C0C0" /><rect x="1019" y="888" width="4" height="1" fill="#C0C0C0" /><rect x="1019" y="884" width="4" height="1" fill="#C0C0C0" /><rect x="1019" y="882" width="4" height="1" fill="#C0C0C0" /><rect x="1019" y="880" width="4" height="1" fill="#C0C0C0" /><rect x="1019" y="878" width="4" height="1" fill="#C0C0C0" /><rect x="1019" y="876" width="4" height="1" fill="#C0C0C0" /><rect x="1019" y="875" width="4" height="1" fill="#C0C0C0" /><rect x="1019" y="874" width="4" height="1" fill="#C0C0C0" /><rect x="1015" y="895" width="8" height="1" fill="#C0C0C0" /><rect x="1864" y="895" width="9" height="1" fill="#C0C0C0" /><rect x="1019" y="910" width="4" height="1" fill="#C0C0C0" /><rect x="1019" y="906" width="4" height="1" fill="#C0C0C0" /><rect x="1019" y="904" width="4" height="1" fill="#C0C0C0" /><rect x="1019" y="902" width="4" height="1" fill="#C0C0C0" /><rect x="1019" y="900" width="4" height="1" fill="#C0C0C0" /><rect x="1019" y="898" width="4" height="1" fill="#C0C0C0" /><rect x="1019" y="897" width="4" height="1" fill="#C0C0C0" /><rect x="1019" y="896" width="4" height="1" fill="#C0C0C0" /><rect x="1015" y="917" width="8" height="1" fill="#C0C0C0" /><rect x="1864" y="917" width="9" height="1" fill="#C0C0C0" /><rect x="1019" y="932" width="4" height="1" fill="#C0C0C0" /><rect x="1019" y="928" width="4" height="1" fill="#C0C0C0" /><rect x="1019" y="926" width="4" height="1" fill="#C0C0C0" /><rect x="1019" y="924" width="4" height="1" fill="#C0C0C0" /><rect x="1019" y="922" width="4" height="1" fill="#C0C0C0" /><rect x="1019" y="920" width="4" height="1" fill="#C0C0C0" /><rect x="1019" y="919" width="4" height="1" fill="#C0C0C0" /><rect x="1019" y="918" width="4" height="1" fill="#C0C0C0" /><rect x="1015" y="938" width="8" height="1" fill="#C0C0C0" /><rect x="1864" y="938" width="9" height="1" fill="#C0C0C0" /><rect x="1019" y="953" width="4" height="1" fill="#C0C0C0" /><rect x="1019" y="949" width="4" height="1" fill="#C0C0C0" /><rect x="1019" y="947" width="4" height="1" fill="#C0C0C0" /><rect x="1019" y="945" width="4" height="1" fill="#C0C0C0" /><rect x="1019" y="943" width="4" height="1" fill="#C0C0C0" /><rect x="1019" y="941" width="4" height="1" fill="#C0C0C0" /><rect x="1019" y="940" width="4" height="1" fill="#C0C0C0" /><rect x="1019" y="939" width="4" height="1" fill="#C0C0C0" /><rect x="1015" y="960" width="8" height="1" fill="#C0C0C0" /><rect x="1864" y="960" width="9" height="1" fill="#C0C0C0" /><rect x="1019" y="975" width="4" height="1" fill="#C0C0C0" /><rect x="1019" y="971" width="4" height="1" fill="#C0C0C0" /><rect x="1019" y="969" width="4" height="1" fill="#C0C0C0" /><rect x="1019" y="967" width="4" height="1" fill="#C0C0C0" /><rect x="1019" y="965" width="4" height="1" fill="#C0C0C0" /><rect x="1019" y="963" width="4" height="1" fill="#C0C0C0" /><rect x="1019" y="962" width="4" height="1" fill="#C0C0C0" /><rect x="1019" y="961" width="4" height="1" fill="#C0C0C0" /><rect x="1015" y="982" width="8" height="1" fill="#C0C0C0" /><rect x="1864" y="982" width="9" height="1" fill="#C0C0C0" /><rect x="1022" y="982" width="1" height="9" fill="#C0C0C0" /><rect x="1106" y="982" width="1" height="9" fill="#C0C0C0" /><rect x="1190" y="982" width="1" height="9" fill="#C0C0C0" /><rect x="1275" y="982" width="1" height="9" fill="#C0C0C0" /><rect x="1359" y="982" width="1" height="9" fill="#C0C0C0" /><rect x="1443" y="982" width="1" height="9" fill="#C0C0C0" /><rect x="1527" y="982" width="1" height="9" fill="#C0C0C0" /><rect x="1611" y="982" width="1" height="9" fill="#C0C0C0" /><rect x="1696" y="982" width="1" height="9" fill="#C0C0C0" /><rect x="1780" y="982" width="1" height="9" fill="#C0C0C0" /><rect x="1864" y="982" width="1" height="9" fill="#C0C0C0" /></g><text x="1013.5" y="616" font-family="Liberation Sans" font-size="13.5" fill="#C0C0C0" text-anchor="end" stroke="#C0C0C0" stroke-width="0.3">1000</text><text x="1013.5" y="638" font-family="Liberation Sans" font-size="13.5" fill="#C0C0C0" text-anchor="end" stroke="#C0C0C0" stroke-width="0.3">100</text><text x="1013.5" y="660" font-family="Liberation Sans" font-size="13.5" fill="#C0C0C0" text-anchor="end" stroke="#C0C0C0" stroke-width="0.3">10</text><text x="1013.5" y="681" font-family="Liberation Sans" font-size="13.5" fill="#C0C0C0" text-anchor="end" stroke="#C0C0C0" stroke-width="0.3">1</text><text x="1013.5" y="703" font-family="Liberation Sans" font-size="13.5" fill="#C0C0C0" text-anchor="end" stroke="#C0C0C0" stroke-width="0.3">0.1</text><text x="1013.5" y="725" font-family="Liberation Sans" font-size="13.5" fill="#C0C0C0" text-anchor="end" stroke="#C0C0C0" stroke-width="0.3">0.01</text><text x="1013.5" y="747" font-family="Liberation Sans" font-size="13.5" fill="#C0C0C0" text-anchor="end" stroke="#C0C0C0" stroke-width="0.3">0.001</text><text x="1013.5" y="769" font-family="Liberation Sans" font-size="13.5" fill="#C0C0C0" text-anchor="end" stroke="#C0C0C0" stroke-width="0.3">0.0001</text><text x="1013.5" y="791" font-family="Liberation Sans" font-size="13.5" fill="#C0C0C0" text-anchor="end" stroke="#C0C0C0" stroke-width="0.3">1e-005</text><text x="1013.5" y="812" font-family="Liberation Sans" font-size="13.5" fill="#C0C0C0" text-anchor="end" stroke="#C0C0C0" stroke-width="0.3">1e-006</text><text x="1013.5" y="834" font-family="Liberation Sans" font-size="13.5" fill="#C0C0C0" text-anchor="end" stroke="#C0C0C0" stroke-width="0.3">1e-007</text><text x="1013.5" y="856" font-family="Liberation Sans" font-size="13.5" fill="#C0C0C0" text-anchor="end" stroke="#C0C0C0" stroke-width="0.3">1e-008</text><text x="1013.5" y="878" font-family="Liberation Sans" font-size="13.5" fill="#C0C0C0" text-anchor="end" stroke="#C0C0C0" stroke-width="0.3">1e-009</text><text x="1013.5" y="900" font-family="Liberation Sans" font-size="13.5" fill="#C0C0C0" text-anchor="end" stroke="#C0C0C0" stroke-width="0.3">1e-010</text><text x="1013.5" y="922" font-family="Liberation Sans" font-size="13.5" fill="#C0C0C0" text-anchor="end" stroke="#C0C0C0" stroke-width="0.3">1e-011</text><text x="1013.5" y="943" font-family="Liberation Sans" font-size="13.5" fill="#C0C0C0" text-anchor="end" stroke="#C0C0C0" stroke-width="0.3">1e-012</text><text x="1013.5" y="965" font-family="Liberation Sans" font-size="13.5" fill="#C0C0C0" text-anchor="end" stroke="#C0C0C0" stroke-width="0.3">1e-013</text><text x="1013.5" y="987" font-family="Liberation Sans" font-size="13.5" fill="#C0C0C0" text-anchor="end" stroke="#C0C0C0" stroke-width="0.3">1e-014</text><text x="1906" y="616" font-family="Liberation Sans" font-size="13.5" fill="#C0C0C0" text-anchor="end" stroke="#C0C0C0" stroke-width="0.3">1.5A</text><text x="1906" y="638" font-family="Liberation Sans" font-size="13.5" fill="#C0C0C0" text-anchor="end" stroke="#C0C0C0" stroke-width="0.3">1.4A</text><text x="1906" y="660" font-family="Liberation Sans" font-size="13.5" fill="#C0C0C0" text-anchor="end" stroke="#C0C0C0" stroke-width="0.3">1.3A</text><text x="1906" y="681" font-family="Liberation Sans" font-size="13.5" fill="#C0C0C0" text-anchor="end" stroke="#C0C0C0" stroke-width="0.3">1.2A</text><text x="1906" y="703" font-family="Liberation Sans" font-size="13.5" fill="#C0C0C0" text-anchor="end" stroke="#C0C0C0" stroke-width="0.3">1.1A</text><text x="1906" y="725" font-family="Liberation Sans" font-size="13.5" fill="#C0C0C0" text-anchor="end" stroke="#C0C0C0" stroke-width="0.3">1.0A</text><text x="1906" y="747" font-family="Liberation Sans" font-size="13.5" fill="#C0C0C0" text-anchor="end" stroke="#C0C0C0" stroke-width="0.3">0.9A</text><text x="1906" y="769" font-family="Liberation Sans" font-size="13.5" fill="#C0C0C0" text-anchor="end" stroke="#C0C0C0" stroke-width="0.3">0.8A</text><text x="1906" y="791" font-family="Liberation Sans" font-size="13.5" fill="#C0C0C0" text-anchor="end" stroke="#C0C0C0" stroke-width="0.3">0.7A</text><text x="1906" y="812" font-family="Liberation Sans" font-size="13.5" fill="#C0C0C0" text-anchor="end" stroke="#C0C0C0" stroke-width="0.3">0.6A</text><text x="1906" y="834" font-family="Liberation Sans" font-size="13.5" fill="#C0C0C0" text-anchor="end" stroke="#C0C0C0" stroke-width="0.3">0.5A</text><text x="1906" y="856" font-family="Liberation Sans" font-size="13.5" fill="#C0C0C0" text-anchor="end" stroke="#C0C0C0" stroke-width="0.3">0.4A</text><text x="1906" y="878" font-family="Liberation Sans" font-size="13.5" fill="#C0C0C0" text-anchor="end" stroke="#C0C0C0" stroke-width="0.3">0.3A</text><text x="1906" y="900" font-family="Liberation Sans" font-size="13.5" fill="#C0C0C0" text-anchor="end" stroke="#C0C0C0" stroke-width="0.3">0.2A</text><text x="1906" y="922" font-family="Liberation Sans" font-size="13.5" fill="#C0C0C0" text-anchor="end" stroke="#C0C0C0" stroke-width="0.3">0.1A</text><text x="1906" y="943" font-family="Liberation Sans" font-size="13.5" fill="#C0C0C0" text-anchor="end" stroke="#C0C0C0" stroke-width="0.3">0.0A</text><text x="1906" y="965" font-family="Liberation Sans" font-size="13.5" fill="#C0C0C0" text-anchor="end" stroke="#C0C0C0" stroke-width="0.3">-0.1A</text><text x="1906" y="987" font-family="Liberation Sans" font-size="13.5" fill="#C0C0C0" text-anchor="end" stroke="#C0C0C0" stroke-width="0.3">-0.2A</text><text x="1022.5" y="1002.5" font-family="Liberation Sans" font-size="13.5" fill="#C0C0C0" text-anchor="middle" stroke="#C0C0C0" stroke-width="0.3">0μs</text><text x="1106.7" y="1002.5" font-family="Liberation Sans" font-size="13.5" fill="#C0C0C0" text-anchor="middle" stroke="#C0C0C0" stroke-width="0.3">20μs</text><text x="1190.9" y="1002.5" font-family="Liberation Sans" font-size="13.5" fill="#C0C0C0" text-anchor="middle" stroke="#C0C0C0" stroke-width="0.3">40μs</text><text x="1275.1" y="1002.5" font-family="Liberation Sans" font-size="13.5" fill="#C0C0C0" text-anchor="middle" stroke="#C0C0C0" stroke-width="0.3">60μs</text><text x="1359.3" y="1002.5" font-family="Liberation Sans" font-size="13.5" fill="#C0C0C0" text-anchor="middle" stroke="#C0C0C0" stroke-width="0.3">80μs</text><text x="1443.5" y="1002.5" font-family="Liberation Sans" font-size="13.5" fill="#C0C0C0" text-anchor="middle" stroke="#C0C0C0" stroke-width="0.3">100μs</text><text x="1527.7" y="1002.5" font-family="Liberation Sans" font-size="13.5" fill="#C0C0C0" text-anchor="middle" stroke="#C0C0C0" stroke-width="0.3">120μs</text><text x="1611.9" y="1002.5" font-family="Liberation Sans" font-size="13.5" fill="#C0C0C0" text-anchor="middle" stroke="#C0C0C0" stroke-width="0.3">140μs</text><text x="1696.1" y="1002.5" font-family="Liberation Sans" font-size="13.5" fill="#C0C0C0" text-anchor="middle" stroke="#C0C0C0" stroke-width="0.3">160μs</text><text x="1780.3000000000002" y="1002.5" font-family="Liberation Sans" font-size="13.5" fill="#C0C0C0" text-anchor="middle" stroke="#C0C0C0" stroke-width="0.3">180μs</text><text x="1864.5" y="1002.5" font-family="Liberation Sans" font-size="13.5" fill="#C0C0C0" text-anchor="middle" stroke="#C0C0C0" stroke-width="0.3">200μs</text><g shape-rendering="crispEdges" stroke-linejoin="round"><path d="M1275.5,982 V619.5 H1277.5 L1281,656 L1285,699 L1288,721 L1291,738 L1294,745 L1296,752 M1305,768 L1308,775 M1332.5,830 L1342.5,852.5 L1350,864 L1355,869.5 H1647.5 V868.5 H1817.5 V869.5 H1862.5 V862 V982 M1861.5,862 V982" fill="none" stroke="#FFFFFF" stroke-width="1.05" /><path d="M1022.5,982 V743 L1026,760 L1032.5,780 L1040,802.5 L1042.5,815 L1043.5,820 V982" fill="none" stroke="#0000FF" stroke-width="1.05" /><path d="M1279.5,982 V722 L1281.5,720.5 L1283.5,720.5 L1287,731 L1304,768 L1310,780 L1332.5,830 L1350,867.5 L1355,886 L1357.5,885 L1375,890 L1395,896 L1412.5,907.5 L1417.5,920 L1423.5,938 V982" fill="none" stroke="#0000FF" stroke-width="1.05" /><path d="M1022.5,655.5 V937.5 L1275.5,716 V760 H1276.5 V900 L1277.5,920 L1279,932 L1280.5,937.5 L1282,938.5 H1864.5" fill="none" stroke="#FF0000" stroke-width="1.05" /></g><text x="1162" y="606" font-family="Liberation Sans" font-size="13.5" fill="#FFFFFF" text-anchor="middle" stroke="#FFFFFF" stroke-width="0.2">V(a)</text><text x="1441" y="606" font-family="Liberation Sans" font-size="13.5" fill="#0000FF" text-anchor="middle" stroke="#0000FF" stroke-width="0.2">V(c)</text><text x="1722" y="606" font-family="Liberation Sans" font-size="13.5" fill="#FF0000" text-anchor="middle" stroke="#FF0000" stroke-width="0.2">I(L1)</text><path d="M959,560 V108 A6,6 0 0 1 965,102 H1912 A6,6 0 0 1 1918,108 V560 Z" fill="#333333"/><path d="M960,559 V108 A5,5 0 0 1 965,103 H1912 A5,5 0 0 1 1917,108 V559 Z" fill="#FFFFFF"/><path d="M961,559 V108 A4,4 0 0 1 965,104 H1912 A4,4 0 0 1 1916,108 V559 Z" fill="#B9D1EA"/><path d="M961,134 V108 A4,4 0 0 1 965,104 H1912 A4,4 0 0 1 1916,108 V134 Z" fill="url(#gAct)"/><rect x="959" y="559" width="959" height="1" fill="#333333" /><rect x="960" y="558" width="957" height="1" fill="#FFFFFF" /><rect x="961" y="558" width="955" height="1" fill="#62D4F2"  opacity="0.7"/><rect x="1916" y="108" width="1" height="451" fill="#62D4F2"  opacity="0.5"/><rect x="967" y="133" width="943" height="419" fill="#FFFFFF" /><rect x="967" y="133" width="942" height="1" fill="#A0A0A0" /><rect x="967" y="133" width="1" height="418" fill="#A0A0A0" /><rect x="968" y="134" width="940" height="1" fill="#696969" /><rect x="968" y="134" width="1" height="416" fill="#696969" /><rect x="968" y="550" width="941" height="1" fill="#E3E3E3" /><rect x="1908" y="134" width="1" height="417" fill="#E3E3E3" /><rect x="969" y="135" width="939" height="415" fill="#FFFFFF" /><g transform="translate(971,113)" fill="#0000FF"><rect x="4" y="3" width="2" height="9"/><rect x="1" y="7" width="3" height="1.2"/><path d="M6,4.5 L11,0.2" stroke="#0000FF" stroke-width="1.2" fill="none"/><path d="M6,10 L11.8,15.6" stroke="#0000FF" stroke-width="1.2" fill="none"/><path d="M7,12.8 L10.2,10.8 L11,14.6 Z"/></g><text x="990" y="126" font-family="Liberation Sans" font-size="12" fill="#000" textLength="72.637846875" lengthAdjust="spacingAndGlyphs" >coil discharge</text><rect x="1808.5" y="112.5" width="31" height="17" rx="2.5" fill="url(#gBtnA)" stroke="#6E84A3"/><rect x="1809.5" y="113.5" width="29" height="15" rx="1.5" fill="none" stroke="#FFFFFF" stroke-opacity="0.35"/><rect x="1818.5" y="120.5" width="10" height="4" rx="1" fill="#F2F2F2" stroke="#3A3F4A"/><rect x="1842.5" y="112.5" width="31" height="17" rx="2.5" fill="url(#gBtnA)" stroke="#6E84A3"/><rect x="1843.5" y="113.5" width="29" height="15" rx="1.5" fill="none" stroke="#FFFFFF" stroke-opacity="0.35"/><rect x="1852.5" y="116.5" width="10" height="8" rx="1" fill="#F2F2F2" stroke="#3A3F4A"/><rect x="1855" y="119" width="5" height="2" fill="#B8CCE0" stroke="#3A3F4A" stroke-width="0.8"/><rect x="1876.5" y="112.5" width="31" height="17" rx="2.5" fill="url(#gBtnC)" stroke="#4A1414"/><rect x="1877.5" y="113.5" width="29" height="15" rx="1.5" fill="none" stroke="#FFFFFF" stroke-opacity="0.35"/><path d="M1888.1,118.1 L1894.7,122.4 M1894.7,118.1 L1888.1,122.4" stroke="#43161A" stroke-width="4.2" stroke-linecap="round"/><path d="M1888.1,118.1 L1894.7,122.4 M1894.7,118.1 L1888.1,122.4" stroke="#F4F4F4" stroke-width="2.3" stroke-linecap="round"/><g transform="translate(0,0)" shape-rendering="crispEdges"><path d="M1065.5,199.5 L1065.5,183.5 L1779.5,183.5 L1779.5,311.5" stroke="#0000FF" fill="none" stroke-linecap="square"/><path d="M1779.5,389.5 L1779.5,500.5 L1398.5,500.5 L1398.5,491.5" stroke="#0000FF" fill="none" stroke-linecap="square"/><path d="M1128.5,183.5 L1128.5,199.5" stroke="#0000FF" fill="none" stroke-linecap="square"/><path d="M1271.5,183.5 L1271.5,215.5" stroke="#0000FF" fill="none" stroke-linecap="square"/><path d="M1335.5,183.5 L1335.5,215.5" stroke="#0000FF" fill="none" stroke-linecap="square"/><path d="M1446.5,183.5 L1446.5,200.5" stroke="#0000FF" fill="none" stroke-linecap="square"/><path d="M1509.5,183.5 L1509.5,199.5" stroke="#0000FF" fill="none" stroke-linecap="square"/><path d="M1589.5,183.5 L1589.5,199.5" stroke="#0000FF" fill="none" stroke-linecap="square"/><path d="M1716.5,183.5 L1716.5,199.5" stroke="#0000FF" fill="none" stroke-linecap="square"/><path d="M1065.5,278.5 L1065.5,310.5 L1160.5,310.5" stroke="#0000FF" fill="none" stroke-linecap="square"/><path d="M1128.5,278.5 L1128.5,310.5" stroke="#0000FF" fill="none" stroke-linecap="square"/><path d="M1271.5,295.5 L1271.5,310.5 L1414.5,310.5" stroke="#0000FF" fill="none" stroke-linecap="square"/><path d="M1335.5,295.5 L1335.5,310.5" stroke="#0000FF" fill="none" stroke-linecap="square"/><path d="M1446.5,263.5 L1446.5,294.5 L1638.5,294.5" stroke="#0000FF" fill="none" stroke-linecap="square"/><path d="M1509.5,279.5 L1509.5,294.5" stroke="#0000FF" fill="none" stroke-linecap="square"/><path d="M1589.5,279.5 L1589.5,294.5" stroke="#0000FF" fill="none" stroke-linecap="square"/><path d="M1589.5,349.5 L1589.5,374.5" stroke="#0000FF" fill="none" stroke-linecap="square"/><path d="M1589.5,357.5 L1638.5,357.5" stroke="#0000FF" fill="none" stroke-linecap="square"/><path d="M1700.5,357.5 L1716.5,357.5 L1716.5,326.5" stroke="#0000FF" fill="none" stroke-linecap="square"/><path d="M1716.5,246.5 L1779.5,246.5" stroke="#0000FF" fill="none" stroke-linecap="square"/><path d="M1779.5,246.5 L1779.5,311.5" stroke="#0000FF" fill="none" stroke-linecap="square"/><path d="M1478.5,405.5 L1509.5,405.5 L1509.5,453.5 L1541.5,453.5" stroke="#0000FF" fill="none" stroke-linecap="square"/><path d="M1398.5,421.5 L1398.5,405.5" stroke="#0000FF" fill="none" stroke-linecap="square"/><path d="M1589.5,474.5 L1589.5,500.5" stroke="#0000FF" fill="none" stroke-linecap="square"/><path d="M1698.5,199.5 H1734.5 L1716.5,216.5 Z" stroke="#0000FF" fill="none"/><path d="M1065.5,199 A16,16 0 1 1 1054.92,227 A16,16 0 1 1 1054.92,251 A16,16 0 1 1 1065.5,279" stroke="#000080" fill="none" stroke-linecap="square"/><circle cx="1057.5" cy="266" r="3.5" stroke="#000080" fill="none"/><path d="M1128.5,199.5 V206.5 L1144.5,214.5 L1112.5,230.5 L1144.5,246.5 L1112.5,262.5 L1128.5,270.5 V278.5" stroke="#000080" fill="none" stroke-linecap="square"/><path d="M1271.5,215.5 V222.5 L1287.5,230.5 L1255.5,246.5 L1287.5,262.5 L1255.5,278.5 L1271.5,286.5 V294.5" stroke="#000080" fill="none" stroke-linecap="square"/><path d="M1335.5,215 A16,16 0 1 1 1324.92,243 A16,16 0 1 1 1324.92,267 A16,16 0 1 1 1335.5,295" stroke="#000080" fill="none" stroke-linecap="square"/><circle cx="1327.5" cy="282" r="3.5" stroke="#000080" fill="none"/><path d="M1509.5,199.5 V206.5 L1525.5,214.5 L1493.5,230.5 L1525.5,246.5 L1493.5,262.5 L1509.5,270.5 V278.5" stroke="#000080" fill="none" stroke-linecap="square"/><path d="M1589.5,199 A16,16 0 1 1 1578.92,227 A16,16 0 1 1 1578.92,251 A16,16 0 1 1 1589.5,279" stroke="#000080" fill="none" stroke-linecap="square"/><circle cx="1581.5" cy="266" r="3.5" stroke="#000080" fill="none"/><path d="M1446.5,200 V226.5 M1430,226.5 H1463 M1430,234.5 H1463 M1446.5,234.5 V263" stroke="#000080" fill="none" stroke-linecap="square"/><path d="M1716.5,246 V266 M1700.5,266.5 h32 v8 h-32 z M1684,282.5 H1749 M1700.5,290.5 h32 v8 h-32 z M1684,306.5 H1749 M1716.5,306.5 V326" stroke="#000080" fill="none" stroke-linecap="square"/><path d="M1728,318.5 H1737 M1732.5,314 V323" stroke="#000080" fill="none" stroke-linecap="square"/><path d="M1779.5,311 V330 M1748,330.5 H1813 M1764.5,338.5 h32 v8 h-32 z M1748,353.5 H1813 M1764.5,361.5 h32 v8 h-32 z M1779.5,369.5 V389" stroke="#000080" fill="none" stroke-linecap="square"/><path d="M1760,318.5 H1769 M1764.5,314 V323" stroke="#000080" fill="none" stroke-linecap="square"/><path d="M1779.5,389.5 L1779.5,500.5" stroke="#0000FF" fill="none" stroke-linecap="square"/><path d="M1589.5,294 V314 M1573,314.5 H1606 L1589.5,338.5 L1573,314.5 M1573,338.5 H1606 M1589.5,338 V349" stroke="#000080" fill="none" stroke-linecap="square"/><path d="M1638,357.5 H1656 M1656.5,343 V373 L1680.5,357.5 L1656.5,343 M1680.5,343 V373 M1680,357.5 H1700" stroke="#000080" fill="none" stroke-linecap="square"/><path d="M1589.5,374 V389.5 H1557.5 M1557.5,381 V398 M1557.5,413 V430 M1557.5,445 V462 M1549.5,389 V454 M1549.5,453.5 H1541 M1557.5,453.5 H1589.5 M1589.5,421.5 V474 M1589.5,421.5 H1581.5 M1581.5,417 V426 M1581.5,417 L1560,421.5 L1581.5,426 M1568,419.5 L1581.5,421.5" stroke="#000080" fill="none" stroke-linecap="square"/><path d="M1398.5,405.5 H1406.5 L1414.5,389.5 L1430.5,421.5 L1446.5,389.5 L1462.5,421.5 L1470.5,405.5 H1478.5" stroke="#000080" fill="none" stroke-linecap="square"/><path d="M1398.5,421 V429.5 M1398.5,491 V500" stroke="#000080" fill="none" stroke-linecap="square"/><circle cx="1398.5" cy="460.5" r="31" stroke="#000080" fill="none"/><path d="M1394,437.5 H1403 M1398.5,433 V442 M1394,484.5 H1403" stroke="#000080" fill="none" stroke-linecap="square"/><path d="M1374.5,462 A12,12 0 0 1 1398.5,462 A12,12 0 0 0 1422.5,462" stroke="#000080" fill="none" stroke-linecap="square"/><rect x="1124" y="179" width="9" height="9" fill="#0000FF"/><rect x="1267" y="179" width="9" height="9" fill="#0000FF"/><rect x="1331" y="179" width="9" height="9" fill="#0000FF"/><rect x="1442" y="179" width="9" height="9" fill="#0000FF"/><rect x="1505" y="179" width="9" height="9" fill="#0000FF"/><rect x="1585" y="179" width="9" height="9" fill="#0000FF"/><rect x="1712" y="179" width="9" height="9" fill="#0000FF"/><rect x="1775" y="242" width="9" height="9" fill="#0000FF"/><rect x="1124" y="306" width="9" height="9" fill="#0000FF"/><rect x="1331" y="306" width="9" height="9" fill="#0000FF"/><rect x="1505" y="290" width="9" height="9" fill="#0000FF"/><rect x="1585" y="290" width="9" height="9" fill="#0000FF"/><rect x="1585" y="353" width="9" height="9" fill="#0000FF"/><rect x="1585" y="496" width="9" height="9" fill="#0000FF"/><text x="1042" y="168" font-family="Liberation Sans" font-weight="bold" font-size="23.5" fill="#000" textLength="130" lengthAdjust="spacingAndGlyphs">K2 L2 L3 .01</text><text x="1240" y="168" font-family="Liberation Sans" font-weight="bold" font-size="23.5" fill="#000" textLength="130" lengthAdjust="spacingAndGlyphs">K1 L1 L2 .01</text><text x="1526" y="168.5" font-family="Liberation Sans" font-weight="bold" font-size="23.5" fill="#000" textLength="207" lengthAdjust="spacingAndGlyphs">Rser=.01 Cpar=15p</text><text x="1086" y="230.5" font-family="Liberation Sans" font-weight="bold" font-size="23.5" fill="#000" textLength="26.6" lengthAdjust="spacingAndGlyphs">L3</text><text x="1086" y="270.5" font-family="Liberation Sans" font-weight="bold" font-size="23.5" fill="#000" textLength="51.98" lengthAdjust="spacingAndGlyphs">300μ</text><text x="1149" y="230.5" font-family="Liberation Sans" font-weight="bold" font-size="23.5" fill="#000" textLength="29.14" lengthAdjust="spacingAndGlyphs">R2</text><text x="1149" y="267" font-family="Liberation Sans" font-weight="bold" font-size="23.5" fill="#000" textLength="25.36" lengthAdjust="spacingAndGlyphs">1k</text><text x="1292" y="247" font-family="Liberation Sans" font-weight="bold" font-size="23.5" fill="#000" textLength="29.14" lengthAdjust="spacingAndGlyphs">R3</text><text x="1292" y="283" font-family="Liberation Sans" font-weight="bold" font-size="23.5" fill="#000" textLength="12.68" lengthAdjust="spacingAndGlyphs">1</text><text x="1356" y="247" font-family="Liberation Sans" font-weight="bold" font-size="23.5" fill="#000" textLength="26.6" lengthAdjust="spacingAndGlyphs">L2</text><text x="1356" y="287" font-family="Liberation Sans" font-weight="bold" font-size="23.5" fill="#000" textLength="26.62" lengthAdjust="spacingAndGlyphs">1μ</text><text x="1455" y="214.5" font-family="Liberation Sans" font-weight="bold" font-size="23.5" fill="#000" textLength="29.14" lengthAdjust="spacingAndGlyphs">C1</text><text x="1455" y="262" font-family="Liberation Sans" font-weight="bold" font-size="23.5" fill="#000" textLength="39.28" lengthAdjust="spacingAndGlyphs">35p</text><text x="1530" y="230.5" font-family="Liberation Sans" font-weight="bold" font-size="23.5" fill="#000" textLength="29.14" lengthAdjust="spacingAndGlyphs">R1</text><text x="1530" y="266" font-family="Liberation Sans" font-weight="bold" font-size="23.5" fill="#000" textLength="25.36" lengthAdjust="spacingAndGlyphs">1k</text><text x="1610" y="230.5" font-family="Liberation Sans" font-weight="bold" font-size="23.5" fill="#000" textLength="26.6" lengthAdjust="spacingAndGlyphs">L1</text><text x="1610" y="270.5" font-family="Liberation Sans" font-weight="bold" font-size="23.5" fill="#000" textLength="51.98" lengthAdjust="spacingAndGlyphs">300μ</text><text x="1710" y="252.5" font-family="Liberation Sans" font-weight="bold" font-size="23.5" fill="#000" text-anchor="end" textLength="38.03" lengthAdjust="spacingAndGlyphs">450</text><text x="1727" y="302.5" font-family="Liberation Sans" font-weight="bold" font-size="23.5" fill="#000" textLength="27.88" lengthAdjust="spacingAndGlyphs">V3</text><text x="1803" y="318.5" font-family="Liberation Sans" font-weight="bold" font-size="23.5" fill="#000" textLength="27.88" lengthAdjust="spacingAndGlyphs">V1</text><text x="1804" y="405" font-family="Liberation Sans" font-weight="bold" font-size="23.5" fill="#000" textLength="12.68" lengthAdjust="spacingAndGlyphs">6</text><text x="1638" y="302.5" font-family="Liberation Sans" font-weight="bold" font-size="23.5" fill="#000" textLength="12.68" lengthAdjust="spacingAndGlyphs">a</text><text x="1415" y="318" font-family="Liberation Sans" font-weight="bold" font-size="23.5" fill="#000" textLength="13.92" lengthAdjust="spacingAndGlyphs">b</text><text x="1161" y="318" font-family="Liberation Sans" font-weight="bold" font-size="23.5" fill="#000" textLength="12.68" lengthAdjust="spacingAndGlyphs">c</text><text x="1610.5" y="332.5" font-family="Liberation Sans" font-weight="bold" font-size="23.5" fill="#000" textLength="29.14" lengthAdjust="spacingAndGlyphs">D1</text><text x="1480" y="345" font-family="Liberation Sans" font-weight="bold" font-size="23.5" fill="#000" textLength="89" lengthAdjust="spacingAndGlyphs">MUR460</text><text x="1655.5" y="341" font-family="Liberation Sans" font-weight="bold" font-size="23.5" fill="#000" textLength="29.14" lengthAdjust="spacingAndGlyphs">D2</text><text x="1623" y="393.5" font-family="Liberation Sans" font-weight="bold" font-size="23.5" fill="#000" textLength="89" lengthAdjust="spacingAndGlyphs">MUR460</text><text x="1597.5" y="413.5" font-family="Liberation Sans" font-weight="bold" font-size="23.5" fill="#000" textLength="31.67" lengthAdjust="spacingAndGlyphs">M1</text><text x="1474" y="475.5" font-family="Liberation Sans" font-weight="bold" font-size="23.5" fill="#000" textLength="144" lengthAdjust="spacingAndGlyphs">SPA11N60C3</text><text x="1424.5" y="383.5" font-family="Liberation Sans" font-weight="bold" font-size="23.5" fill="#000" textLength="29.14" lengthAdjust="spacingAndGlyphs">R4</text><text x="1429" y="442.5" font-family="Liberation Sans" font-weight="bold" font-size="23.5" fill="#000" textLength="19.01" lengthAdjust="spacingAndGlyphs">.1</text><text x="1322.5" y="462" font-family="Liberation Sans" font-weight="bold" font-size="23.5" fill="#000" textLength="27.88" lengthAdjust="spacingAndGlyphs">V2</text><text x="1235.5" y="537" font-family="Liberation Sans" font-weight="bold" font-size="23.5" fill="#000" textLength="373" lengthAdjust="spacingAndGlyphs">PULSE(0 10 0 10n 10n 60u 200u 1)</text><text x="1661" y="532.5" font-family="Liberation Sans" font-weight="bold" font-size="23.5" fill="#000" textLength="146" lengthAdjust="spacingAndGlyphs">.tran 0 200u 0</text></g></svg></body></html>
